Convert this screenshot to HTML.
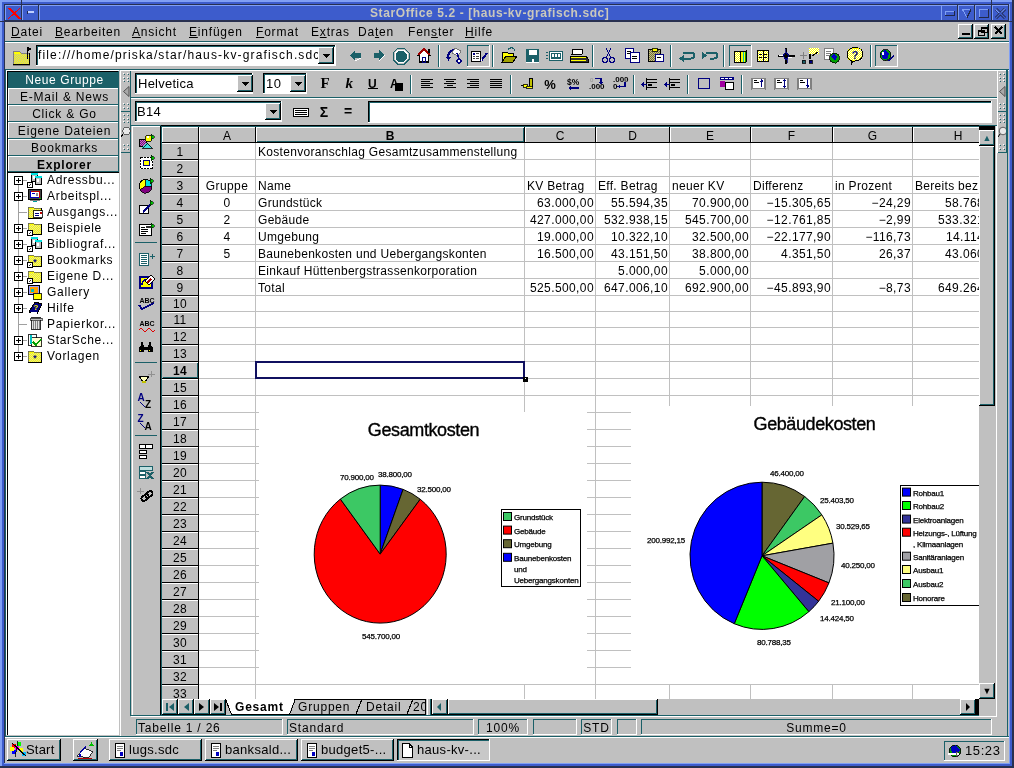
<!DOCTYPE html>
<html><head><meta charset="utf-8"><style>
html,body{margin:0;padding:0;}
body{width:1014px;height:768px;overflow:hidden;position:relative;background:#283050;font-family:"Liberation Sans",sans-serif;}
div{position:absolute;box-sizing:border-box;}
.t{white-space:nowrap;will-change:transform;}
svg{will-change:transform;}
u{text-decoration:underline;text-underline-offset:1px;}
</style></head><body>
<div style="left:0px;top:0px;width:1012px;height:766px;background:#809ff4;"></div>
<div style="left:2px;top:2px;width:1010px;height:764px;background:#3d5ccc;"></div>
<div style="left:4px;top:4px;width:1006px;height:760px;background:#809ff4;"></div>
<div style="left:4px;top:4px;width:1005px;height:759px;background:#283050;"></div>
<div style="left:5px;top:5px;width:1004px;height:758px;background:#c0c0c0;"></div>
<div style="left:5px;top:5px;width:1004px;height:16px;background:#3d5ccc;"></div>
<div style="left:5px;top:5px;width:1004px;height:1px;background:#809ff4;"></div>
<div style="left:5px;top:20px;width:1004px;height:1px;background:#283050;"></div>
<div style="left:5px;top:21px;width:1004px;height:1px;background:#283050;"></div>
<div style="left:5px;top:5px;width:1px;height:15px;background:#809ff4;"></div>
<div style="left:21px;top:5px;width:1px;height:16px;background:#283050;"></div>
<div style="left:22px;top:5px;width:1px;height:15px;background:#809ff4;"></div>
<div style="left:38px;top:5px;width:1px;height:16px;background:#283050;"></div>
<div style="left:21px;top:0px;width:1px;height:21px;background:#283050;"></div>
<div style="left:0px;top:21px;width:5px;height:1px;background:#283050;"></div>
<div style="left:39px;top:5px;width:1px;height:15px;background:#809ff4;"></div>
<div style="left:941px;top:5px;width:1px;height:15px;background:#809ff4;"></div>
<div style="left:957px;top:5px;width:1px;height:16px;background:#283050;"></div>
<div style="left:958px;top:5px;width:1px;height:15px;background:#809ff4;"></div>
<div style="left:974px;top:5px;width:1px;height:16px;background:#283050;"></div>
<div style="left:975px;top:5px;width:1px;height:15px;background:#809ff4;"></div>
<div style="left:991px;top:5px;width:1px;height:16px;background:#283050;"></div>
<div style="left:992px;top:5px;width:1px;height:15px;background:#809ff4;"></div>
<div style="left:1008px;top:5px;width:1px;height:16px;background:#283050;"></div>
<div style="left:991px;top:0px;width:1px;height:5px;background:#283050;"></div>
<div style="left:1009px;top:21px;width:3px;height:1px;background:#283050;"></div>
<div class="t" style="left:370px;top:5px;font-size:12px;letter-spacing:0.6px;color:#cac8bc;text-align:left;line-height:16px;font-weight:bold;">StarOffice 5.2 - [haus-kv-grafisch.sdc]</div>
<div class="t" style="left:11px;top:24px;font-size:12px;letter-spacing:0.8px;color:#000000;text-align:left;line-height:16px;"><u>D</u>atei</div>
<div class="t" style="left:55px;top:24px;font-size:12px;letter-spacing:0.8px;color:#000000;text-align:left;line-height:16px;"><u>B</u>earbeiten</div>
<div class="t" style="left:132px;top:24px;font-size:12px;letter-spacing:0.8px;color:#000000;text-align:left;line-height:16px;"><u>A</u>nsicht</div>
<div class="t" style="left:189px;top:24px;font-size:12px;letter-spacing:0.8px;color:#000000;text-align:left;line-height:16px;"><u>E</u>infügen</div>
<div class="t" style="left:256px;top:24px;font-size:12px;letter-spacing:0.8px;color:#000000;text-align:left;line-height:16px;"><u>F</u>ormat</div>
<div class="t" style="left:311px;top:24px;font-size:12px;letter-spacing:0.8px;color:#000000;text-align:left;line-height:16px;">E<u>x</u>tras</div>
<div class="t" style="left:358px;top:24px;font-size:12px;letter-spacing:0.8px;color:#000000;text-align:left;line-height:16px;">Da<u>t</u>en</div>
<div class="t" style="left:408px;top:24px;font-size:12px;letter-spacing:0.8px;color:#000000;text-align:left;line-height:16px;">Fen<u>s</u>ter</div>
<div class="t" style="left:465px;top:24px;font-size:12px;letter-spacing:0.8px;color:#000000;text-align:left;line-height:16px;"><u>H</u>ilfe</div>
<div style="left:958px;top:24px;width:15px;height:15px;background:#c0c0c0;"></div>
<div style="left:958px;top:24px;width:15px;height:1px;background:#ffffff;"></div>
<div style="left:958px;top:24px;width:1px;height:15px;background:#ffffff;"></div>
<div style="left:958px;top:38px;width:15px;height:1px;background:#1b6068;"></div>
<div style="left:972px;top:24px;width:1px;height:15px;background:#1b6068;"></div>
<div style="left:958px;top:38px;width:15px;height:1px;background:#000000;"></div>
<div style="left:972px;top:24px;width:1px;height:15px;background:#000000;"></div>
<div style="left:959px;top:37px;width:13px;height:1px;background:#1b6068;"></div>
<div style="left:971px;top:25px;width:1px;height:13px;background:#1b6068;"></div>
<div style="left:974px;top:24px;width:15px;height:15px;background:#c0c0c0;"></div>
<div style="left:974px;top:24px;width:15px;height:1px;background:#ffffff;"></div>
<div style="left:974px;top:24px;width:1px;height:15px;background:#ffffff;"></div>
<div style="left:974px;top:38px;width:15px;height:1px;background:#1b6068;"></div>
<div style="left:988px;top:24px;width:1px;height:15px;background:#1b6068;"></div>
<div style="left:974px;top:38px;width:15px;height:1px;background:#000000;"></div>
<div style="left:988px;top:24px;width:1px;height:15px;background:#000000;"></div>
<div style="left:975px;top:37px;width:13px;height:1px;background:#1b6068;"></div>
<div style="left:987px;top:25px;width:1px;height:13px;background:#1b6068;"></div>
<div style="left:991px;top:24px;width:15px;height:15px;background:#c0c0c0;"></div>
<div style="left:991px;top:24px;width:15px;height:1px;background:#ffffff;"></div>
<div style="left:991px;top:24px;width:1px;height:15px;background:#ffffff;"></div>
<div style="left:991px;top:38px;width:15px;height:1px;background:#1b6068;"></div>
<div style="left:1005px;top:24px;width:1px;height:15px;background:#1b6068;"></div>
<div style="left:991px;top:38px;width:15px;height:1px;background:#000000;"></div>
<div style="left:1005px;top:24px;width:1px;height:15px;background:#000000;"></div>
<div style="left:992px;top:37px;width:13px;height:1px;background:#1b6068;"></div>
<div style="left:1004px;top:25px;width:1px;height:13px;background:#1b6068;"></div>
<div style="left:5px;top:41px;width:1004px;height:1px;background:#1b6068;"></div>
<div style="left:5px;top:42px;width:1004px;height:1px;background:#ffffff;"></div>
<div style="left:5px;top:69px;width:1004px;height:1px;background:#1b6068;"></div>
<div style="left:5px;top:70px;width:1004px;height:1px;background:#ffffff;"></div>
<div style="left:36px;top:45px;width:300px;height:21px;background:#ffffff;"></div>
<div style="left:36px;top:45px;width:300px;height:1px;background:#000000;"></div>
<div style="left:36px;top:45px;width:1px;height:21px;background:#000000;"></div>
<div style="left:37px;top:46px;width:298px;height:1px;background:#1b6068;"></div>
<div style="left:37px;top:46px;width:1px;height:19px;background:#1b6068;"></div>
<div style="left:36px;top:65px;width:300px;height:1px;background:#ffffff;"></div>
<div style="left:335px;top:45px;width:1px;height:21px;background:#ffffff;"></div>
<div class="t" style="left:38px;top:47px;width:280px;font-size:12px;letter-spacing:1.15px;color:#000000;text-align:left;line-height:16px;overflow:hidden;white-space:nowrap;">file:///home/priska/star/haus-kv-grafisch.sdc</div>
<div style="left:318px;top:47px;width:16px;height:17px;background:#c0c0c0;"></div>
<div style="left:318px;top:47px;width:16px;height:1px;background:#ffffff;"></div>
<div style="left:318px;top:47px;width:1px;height:17px;background:#ffffff;"></div>
<div style="left:318px;top:63px;width:16px;height:1px;background:#1b6068;"></div>
<div style="left:333px;top:47px;width:1px;height:17px;background:#1b6068;"></div>
<div style="left:318px;top:63px;width:16px;height:1px;background:#000000;"></div>
<div style="left:333px;top:47px;width:1px;height:17px;background:#000000;"></div>
<div style="left:319px;top:62px;width:14px;height:1px;background:#1b6068;"></div>
<div style="left:332px;top:48px;width:1px;height:15px;background:#1b6068;"></div>
<div style="left:131px;top:97px;width:866px;height:1px;background:#1b6068;"></div>
<div style="left:131px;top:98px;width:866px;height:1px;background:#ffffff;"></div>
<div style="left:131px;top:125px;width:866px;height:1px;background:#000000;"></div>
<div style="left:118px;top:70px;width:1px;height:103px;background:#1b6068;"></div>
<div style="left:119px;top:70px;width:1px;height:666px;background:#c0c0c0;"></div>
<div style="left:120px;top:70px;width:1px;height:666px;background:#ffffff;"></div>
<div style="left:130px;top:71px;width:1px;height:645px;background:#1b6068;"></div>
<div style="left:124px;top:74px;width:1px;height:1px;background:#1b6068;"></div>
<div style="left:128px;top:74px;width:1px;height:1px;background:#1b6068;"></div>
<div style="left:123px;top:73px;width:1px;height:1px;background:#ffffff;"></div>
<div style="left:127px;top:73px;width:1px;height:1px;background:#ffffff;"></div>
<div style="left:124px;top:78px;width:1px;height:1px;background:#1b6068;"></div>
<div style="left:128px;top:78px;width:1px;height:1px;background:#1b6068;"></div>
<div style="left:123px;top:77px;width:1px;height:1px;background:#ffffff;"></div>
<div style="left:127px;top:77px;width:1px;height:1px;background:#ffffff;"></div>
<div style="left:124px;top:81px;width:1px;height:1px;background:#1b6068;"></div>
<div style="left:128px;top:81px;width:1px;height:1px;background:#1b6068;"></div>
<div style="left:123px;top:80px;width:1px;height:1px;background:#ffffff;"></div>
<div style="left:127px;top:80px;width:1px;height:1px;background:#ffffff;"></div>
<div style="left:124px;top:104px;width:1px;height:1px;background:#1b6068;"></div>
<div style="left:128px;top:104px;width:1px;height:1px;background:#1b6068;"></div>
<div style="left:123px;top:103px;width:1px;height:1px;background:#ffffff;"></div>
<div style="left:127px;top:103px;width:1px;height:1px;background:#ffffff;"></div>
<div style="left:124px;top:108px;width:1px;height:1px;background:#1b6068;"></div>
<div style="left:128px;top:108px;width:1px;height:1px;background:#1b6068;"></div>
<div style="left:123px;top:107px;width:1px;height:1px;background:#ffffff;"></div>
<div style="left:127px;top:107px;width:1px;height:1px;background:#ffffff;"></div>
<div style="left:124px;top:115px;width:1px;height:1px;background:#1b6068;"></div>
<div style="left:128px;top:115px;width:1px;height:1px;background:#1b6068;"></div>
<div style="left:123px;top:114px;width:1px;height:1px;background:#ffffff;"></div>
<div style="left:127px;top:114px;width:1px;height:1px;background:#ffffff;"></div>
<div style="left:124px;top:119px;width:1px;height:1px;background:#1b6068;"></div>
<div style="left:128px;top:119px;width:1px;height:1px;background:#1b6068;"></div>
<div style="left:123px;top:118px;width:1px;height:1px;background:#ffffff;"></div>
<div style="left:127px;top:118px;width:1px;height:1px;background:#ffffff;"></div>
<div style="left:124px;top:122px;width:1px;height:1px;background:#1b6068;"></div>
<div style="left:128px;top:122px;width:1px;height:1px;background:#1b6068;"></div>
<div style="left:123px;top:121px;width:1px;height:1px;background:#ffffff;"></div>
<div style="left:127px;top:121px;width:1px;height:1px;background:#ffffff;"></div>
<div style="left:124px;top:145px;width:1px;height:1px;background:#1b6068;"></div>
<div style="left:128px;top:145px;width:1px;height:1px;background:#1b6068;"></div>
<div style="left:123px;top:144px;width:1px;height:1px;background:#ffffff;"></div>
<div style="left:127px;top:144px;width:1px;height:1px;background:#ffffff;"></div>
<div style="left:124px;top:149px;width:1px;height:1px;background:#1b6068;"></div>
<div style="left:128px;top:149px;width:1px;height:1px;background:#1b6068;"></div>
<div style="left:123px;top:148px;width:1px;height:1px;background:#ffffff;"></div>
<div style="left:127px;top:148px;width:1px;height:1px;background:#ffffff;"></div>
<div style="left:121px;top:111px;width:9px;height:1px;background:#1b6068;"></div>
<div style="left:121px;top:152px;width:9px;height:1px;background:#1b6068;"></div>
<div style="left:1000px;top:74px;width:1px;height:1px;background:#1b6068;"></div>
<div style="left:1004px;top:74px;width:1px;height:1px;background:#1b6068;"></div>
<div style="left:999px;top:73px;width:1px;height:1px;background:#ffffff;"></div>
<div style="left:1003px;top:73px;width:1px;height:1px;background:#ffffff;"></div>
<div style="left:1000px;top:78px;width:1px;height:1px;background:#1b6068;"></div>
<div style="left:1004px;top:78px;width:1px;height:1px;background:#1b6068;"></div>
<div style="left:999px;top:77px;width:1px;height:1px;background:#ffffff;"></div>
<div style="left:1003px;top:77px;width:1px;height:1px;background:#ffffff;"></div>
<div style="left:1000px;top:81px;width:1px;height:1px;background:#1b6068;"></div>
<div style="left:1004px;top:81px;width:1px;height:1px;background:#1b6068;"></div>
<div style="left:999px;top:80px;width:1px;height:1px;background:#ffffff;"></div>
<div style="left:1003px;top:80px;width:1px;height:1px;background:#ffffff;"></div>
<div style="left:1000px;top:104px;width:1px;height:1px;background:#1b6068;"></div>
<div style="left:1004px;top:104px;width:1px;height:1px;background:#1b6068;"></div>
<div style="left:999px;top:103px;width:1px;height:1px;background:#ffffff;"></div>
<div style="left:1003px;top:103px;width:1px;height:1px;background:#ffffff;"></div>
<div style="left:1000px;top:108px;width:1px;height:1px;background:#1b6068;"></div>
<div style="left:1004px;top:108px;width:1px;height:1px;background:#1b6068;"></div>
<div style="left:999px;top:107px;width:1px;height:1px;background:#ffffff;"></div>
<div style="left:1003px;top:107px;width:1px;height:1px;background:#ffffff;"></div>
<div style="left:1000px;top:115px;width:1px;height:1px;background:#1b6068;"></div>
<div style="left:1004px;top:115px;width:1px;height:1px;background:#1b6068;"></div>
<div style="left:999px;top:114px;width:1px;height:1px;background:#ffffff;"></div>
<div style="left:1003px;top:114px;width:1px;height:1px;background:#ffffff;"></div>
<div style="left:1000px;top:119px;width:1px;height:1px;background:#1b6068;"></div>
<div style="left:1004px;top:119px;width:1px;height:1px;background:#1b6068;"></div>
<div style="left:999px;top:118px;width:1px;height:1px;background:#ffffff;"></div>
<div style="left:1003px;top:118px;width:1px;height:1px;background:#ffffff;"></div>
<div style="left:1000px;top:122px;width:1px;height:1px;background:#1b6068;"></div>
<div style="left:1004px;top:122px;width:1px;height:1px;background:#1b6068;"></div>
<div style="left:999px;top:121px;width:1px;height:1px;background:#ffffff;"></div>
<div style="left:1003px;top:121px;width:1px;height:1px;background:#ffffff;"></div>
<div style="left:1000px;top:145px;width:1px;height:1px;background:#1b6068;"></div>
<div style="left:1004px;top:145px;width:1px;height:1px;background:#1b6068;"></div>
<div style="left:999px;top:144px;width:1px;height:1px;background:#ffffff;"></div>
<div style="left:1003px;top:144px;width:1px;height:1px;background:#ffffff;"></div>
<div style="left:1000px;top:149px;width:1px;height:1px;background:#1b6068;"></div>
<div style="left:1004px;top:149px;width:1px;height:1px;background:#1b6068;"></div>
<div style="left:999px;top:148px;width:1px;height:1px;background:#ffffff;"></div>
<div style="left:1003px;top:148px;width:1px;height:1px;background:#ffffff;"></div>
<div style="left:997px;top:111px;width:9px;height:1px;background:#1b6068;"></div>
<div style="left:997px;top:152px;width:9px;height:1px;background:#1b6068;"></div>
<svg style="position:absolute;left:0;top:0" width="1014" height="160"><polygon points="129,86.5 123.5,91.5 129,96.5" fill="#a8a8a8" stroke="#505050" stroke-width="1"/><polygon points="1005,86.5 999.5,91.5 1005,96.5" fill="#a8a8a8" stroke="#505050" stroke-width="1"/><circle cx="1003" cy="131" r="3.8" fill="#e8e8e8" stroke="#404040" stroke-width="0.8"/><path d="M1000,134 L998,137" stroke="#000" fill="none"/></svg>
<div style="left:997px;top:70px;width:1px;height:83px;background:#ffffff;"></div>
<div style="left:1006px;top:70px;width:1px;height:83px;background:#1b6068;"></div>
<div style="left:1007px;top:70px;width:1px;height:666px;background:#1b6068;"></div>
<div style="left:135px;top:73px;width:118px;height:21px;background:#ffffff;"></div>
<div style="left:135px;top:73px;width:118px;height:1px;background:#000000;"></div>
<div style="left:135px;top:73px;width:1px;height:21px;background:#000000;"></div>
<div style="left:136px;top:74px;width:116px;height:1px;background:#1b6068;"></div>
<div style="left:136px;top:74px;width:1px;height:19px;background:#1b6068;"></div>
<div style="left:135px;top:93px;width:118px;height:1px;background:#ffffff;"></div>
<div style="left:252px;top:73px;width:1px;height:21px;background:#ffffff;"></div>
<div class="t" style="left:138px;top:75px;font-size:13px;letter-spacing:0.25px;color:#000000;text-align:left;line-height:17px;">Helvetica</div>
<div style="left:237px;top:75px;width:16px;height:17px;background:#c0c0c0;"></div>
<div style="left:237px;top:75px;width:16px;height:1px;background:#ffffff;"></div>
<div style="left:237px;top:75px;width:1px;height:17px;background:#ffffff;"></div>
<div style="left:237px;top:91px;width:16px;height:1px;background:#1b6068;"></div>
<div style="left:252px;top:75px;width:1px;height:17px;background:#1b6068;"></div>
<div style="left:237px;top:91px;width:16px;height:1px;background:#000000;"></div>
<div style="left:252px;top:75px;width:1px;height:17px;background:#000000;"></div>
<div style="left:238px;top:90px;width:14px;height:1px;background:#1b6068;"></div>
<div style="left:251px;top:76px;width:1px;height:15px;background:#1b6068;"></div>
<div style="left:263px;top:73px;width:44px;height:21px;background:#ffffff;"></div>
<div style="left:263px;top:73px;width:44px;height:1px;background:#000000;"></div>
<div style="left:263px;top:73px;width:1px;height:21px;background:#000000;"></div>
<div style="left:264px;top:74px;width:42px;height:1px;background:#1b6068;"></div>
<div style="left:264px;top:74px;width:1px;height:19px;background:#1b6068;"></div>
<div style="left:263px;top:93px;width:44px;height:1px;background:#ffffff;"></div>
<div style="left:306px;top:73px;width:1px;height:21px;background:#ffffff;"></div>
<div class="t" style="left:266px;top:75px;font-size:13px;letter-spacing:0.4px;color:#000000;text-align:left;line-height:17px;">10</div>
<div style="left:290px;top:75px;width:16px;height:17px;background:#c0c0c0;"></div>
<div style="left:290px;top:75px;width:16px;height:1px;background:#ffffff;"></div>
<div style="left:290px;top:75px;width:1px;height:17px;background:#ffffff;"></div>
<div style="left:290px;top:91px;width:16px;height:1px;background:#1b6068;"></div>
<div style="left:305px;top:75px;width:1px;height:17px;background:#1b6068;"></div>
<div style="left:290px;top:91px;width:16px;height:1px;background:#000000;"></div>
<div style="left:305px;top:75px;width:1px;height:17px;background:#000000;"></div>
<div style="left:291px;top:90px;width:14px;height:1px;background:#1b6068;"></div>
<div style="left:304px;top:76px;width:1px;height:15px;background:#1b6068;"></div>
<div style="left:135px;top:101px;width:147px;height:21px;background:#ffffff;"></div>
<div style="left:135px;top:101px;width:147px;height:1px;background:#000000;"></div>
<div style="left:135px;top:101px;width:1px;height:21px;background:#000000;"></div>
<div style="left:136px;top:102px;width:145px;height:1px;background:#1b6068;"></div>
<div style="left:136px;top:102px;width:1px;height:19px;background:#1b6068;"></div>
<div style="left:135px;top:121px;width:147px;height:1px;background:#ffffff;"></div>
<div style="left:281px;top:101px;width:1px;height:21px;background:#ffffff;"></div>
<div class="t" style="left:137px;top:103px;font-size:13px;letter-spacing:0.3px;color:#000000;text-align:left;line-height:17px;">B14</div>
<div style="left:265px;top:103px;width:16px;height:17px;background:#c0c0c0;"></div>
<div style="left:265px;top:103px;width:16px;height:1px;background:#ffffff;"></div>
<div style="left:265px;top:103px;width:1px;height:17px;background:#ffffff;"></div>
<div style="left:265px;top:119px;width:16px;height:1px;background:#1b6068;"></div>
<div style="left:280px;top:103px;width:1px;height:17px;background:#1b6068;"></div>
<div style="left:265px;top:119px;width:16px;height:1px;background:#000000;"></div>
<div style="left:280px;top:103px;width:1px;height:17px;background:#000000;"></div>
<div style="left:266px;top:118px;width:14px;height:1px;background:#1b6068;"></div>
<div style="left:279px;top:104px;width:1px;height:15px;background:#1b6068;"></div>
<div style="left:368px;top:101px;width:624px;height:22px;background:#ffffff;"></div>
<div style="left:368px;top:101px;width:624px;height:1px;background:#000000;"></div>
<div style="left:368px;top:101px;width:1px;height:22px;background:#000000;"></div>
<div style="left:369px;top:102px;width:622px;height:1px;background:#1b6068;"></div>
<div style="left:369px;top:102px;width:1px;height:20px;background:#1b6068;"></div>
<div style="left:368px;top:122px;width:624px;height:1px;background:#ffffff;"></div>
<div style="left:991px;top:101px;width:1px;height:22px;background:#ffffff;"></div>
<div style="left:5px;top:70px;width:113px;height:666px;background:#c0c0c0;"></div>
<div style="left:5px;top:69px;width:114px;height:1px;background:#1b6068;"></div>
<div style="left:5px;top:70px;width:1px;height:666px;background:#1b6068;"></div>
<div style="left:6px;top:70px;width:113px;height:1px;background:#ffffff;"></div>
<div style="left:6px;top:70px;width:1px;height:665px;background:#ffffff;"></div>
<div style="left:7px;top:71px;width:111px;height:1px;background:#000000;"></div>
<div style="left:7px;top:71px;width:1px;height:664px;background:#000000;"></div>
<div style="left:8px;top:72px;width:111px;height:16px;background:#1b6068;"></div>
<div class="t" style="left:9px;top:72px;width:111px;font-size:12px;letter-spacing:0.6px;color:#ffffff;text-align:center;line-height:17px;">Neue Gruppe</div>
<div style="left:8px;top:88px;width:111px;height:17px;background:#c0c0c0;"></div>
<div style="left:8px;top:88px;width:111px;height:1px;background:#ffffff;"></div>
<div style="left:8px;top:88px;width:1px;height:17px;background:#ffffff;"></div>
<div style="left:8px;top:104px;width:111px;height:1px;background:#1b6068;"></div>
<div style="left:118px;top:88px;width:1px;height:17px;background:#1b6068;"></div>
<div class="t" style="left:9px;top:89px;width:111px;font-size:12px;letter-spacing:0.8px;color:#000000;text-align:center;line-height:17px;">E-Mail &amp; News</div>
<div style="left:8px;top:105px;width:111px;height:17px;background:#c0c0c0;"></div>
<div style="left:8px;top:105px;width:111px;height:1px;background:#ffffff;"></div>
<div style="left:8px;top:105px;width:1px;height:17px;background:#ffffff;"></div>
<div style="left:8px;top:121px;width:111px;height:1px;background:#1b6068;"></div>
<div style="left:118px;top:105px;width:1px;height:17px;background:#1b6068;"></div>
<div class="t" style="left:9px;top:106px;width:111px;font-size:12px;letter-spacing:0.8px;color:#000000;text-align:center;line-height:17px;">Click &amp; Go</div>
<div style="left:8px;top:122px;width:111px;height:17px;background:#c0c0c0;"></div>
<div style="left:8px;top:122px;width:111px;height:1px;background:#ffffff;"></div>
<div style="left:8px;top:122px;width:1px;height:17px;background:#ffffff;"></div>
<div style="left:8px;top:138px;width:111px;height:1px;background:#1b6068;"></div>
<div style="left:118px;top:122px;width:1px;height:17px;background:#1b6068;"></div>
<div class="t" style="left:9px;top:123px;width:111px;font-size:12px;letter-spacing:0.8px;color:#000000;text-align:center;line-height:17px;">Eigene Dateien</div>
<div style="left:8px;top:139px;width:111px;height:17px;background:#c0c0c0;"></div>
<div style="left:8px;top:139px;width:111px;height:1px;background:#ffffff;"></div>
<div style="left:8px;top:139px;width:1px;height:17px;background:#ffffff;"></div>
<div style="left:8px;top:155px;width:111px;height:1px;background:#1b6068;"></div>
<div style="left:118px;top:139px;width:1px;height:17px;background:#1b6068;"></div>
<div class="t" style="left:9px;top:140px;width:111px;font-size:12px;letter-spacing:0.8px;color:#000000;text-align:center;line-height:17px;">Bookmarks</div>
<div style="left:8px;top:156px;width:111px;height:16px;background:#c0c0c0;"></div>
<div style="left:8px;top:156px;width:111px;height:1px;background:#ffffff;"></div>
<div style="left:8px;top:156px;width:1px;height:16px;background:#ffffff;"></div>
<div style="left:8px;top:171px;width:111px;height:1px;background:#1b6068;"></div>
<div style="left:118px;top:156px;width:1px;height:16px;background:#1b6068;"></div>
<div class="t" style="left:9px;top:157px;width:111px;font-size:12px;letter-spacing:0.8px;color:#000000;text-align:center;line-height:16px;font-weight:bold;">Explorer</div>
<div style="left:8px;top:171px;width:111px;height:1px;background:#1b6068;"></div>
<div style="left:8px;top:172px;width:111px;height:1px;background:#000000;"></div>
<div style="left:8px;top:173px;width:111px;height:562px;background:#ffffff;"></div>
<div style="left:18px;top:185px;width:1px;height:168px;background:#a0a0a0;"></div>
<div class="t" style="left:47px;top:172px;font-size:12px;letter-spacing:0.7px;color:#000000;text-align:left;line-height:16px;">Adressbu...</div>
<div style="left:23px;top:180px;width:4px;height:1px;background:#a0a0a0;"></div>
<div style="left:14px;top:176px;width:9px;height:9px;background:#000000;"></div>
<div style="left:15px;top:177px;width:7px;height:7px;background:#ffffff;"></div>
<div style="left:16px;top:180px;width:5px;height:1px;background:#000000;"></div>
<div style="left:18px;top:178px;width:1px;height:5px;background:#000000;"></div>
<div class="t" style="left:47px;top:188px;font-size:12px;letter-spacing:0.7px;color:#000000;text-align:left;line-height:16px;">Arbeitspl...</div>
<div style="left:23px;top:196px;width:4px;height:1px;background:#a0a0a0;"></div>
<div style="left:14px;top:192px;width:9px;height:9px;background:#000000;"></div>
<div style="left:15px;top:193px;width:7px;height:7px;background:#ffffff;"></div>
<div style="left:16px;top:196px;width:5px;height:1px;background:#000000;"></div>
<div style="left:18px;top:194px;width:1px;height:5px;background:#000000;"></div>
<div class="t" style="left:47px;top:204px;font-size:12px;letter-spacing:0.7px;color:#000000;text-align:left;line-height:16px;">Ausgangs...</div>
<div style="left:23px;top:212px;width:4px;height:1px;background:#a0a0a0;"></div>
<div style="left:18px;top:212px;width:9px;height:1px;background:#a0a0a0;"></div>
<div class="t" style="left:47px;top:220px;font-size:12px;letter-spacing:0.7px;color:#000000;text-align:left;line-height:16px;">Beispiele</div>
<div style="left:23px;top:228px;width:4px;height:1px;background:#a0a0a0;"></div>
<div style="left:14px;top:224px;width:9px;height:9px;background:#000000;"></div>
<div style="left:15px;top:225px;width:7px;height:7px;background:#ffffff;"></div>
<div style="left:16px;top:228px;width:5px;height:1px;background:#000000;"></div>
<div style="left:18px;top:226px;width:1px;height:5px;background:#000000;"></div>
<div class="t" style="left:47px;top:236px;font-size:12px;letter-spacing:0.7px;color:#000000;text-align:left;line-height:16px;">Bibliograf...</div>
<div style="left:23px;top:244px;width:4px;height:1px;background:#a0a0a0;"></div>
<div style="left:14px;top:240px;width:9px;height:9px;background:#000000;"></div>
<div style="left:15px;top:241px;width:7px;height:7px;background:#ffffff;"></div>
<div style="left:16px;top:244px;width:5px;height:1px;background:#000000;"></div>
<div style="left:18px;top:242px;width:1px;height:5px;background:#000000;"></div>
<div class="t" style="left:47px;top:252px;font-size:12px;letter-spacing:0.7px;color:#000000;text-align:left;line-height:16px;">Bookmarks</div>
<div style="left:23px;top:260px;width:4px;height:1px;background:#a0a0a0;"></div>
<div style="left:14px;top:256px;width:9px;height:9px;background:#000000;"></div>
<div style="left:15px;top:257px;width:7px;height:7px;background:#ffffff;"></div>
<div style="left:16px;top:260px;width:5px;height:1px;background:#000000;"></div>
<div style="left:18px;top:258px;width:1px;height:5px;background:#000000;"></div>
<div class="t" style="left:47px;top:268px;font-size:12px;letter-spacing:0.7px;color:#000000;text-align:left;line-height:16px;">Eigene D...</div>
<div style="left:23px;top:276px;width:4px;height:1px;background:#a0a0a0;"></div>
<div style="left:14px;top:272px;width:9px;height:9px;background:#000000;"></div>
<div style="left:15px;top:273px;width:7px;height:7px;background:#ffffff;"></div>
<div style="left:16px;top:276px;width:5px;height:1px;background:#000000;"></div>
<div style="left:18px;top:274px;width:1px;height:5px;background:#000000;"></div>
<div class="t" style="left:47px;top:284px;font-size:12px;letter-spacing:0.7px;color:#000000;text-align:left;line-height:16px;">Gallery</div>
<div style="left:23px;top:292px;width:4px;height:1px;background:#a0a0a0;"></div>
<div style="left:14px;top:288px;width:9px;height:9px;background:#000000;"></div>
<div style="left:15px;top:289px;width:7px;height:7px;background:#ffffff;"></div>
<div style="left:16px;top:292px;width:5px;height:1px;background:#000000;"></div>
<div style="left:18px;top:290px;width:1px;height:5px;background:#000000;"></div>
<div class="t" style="left:47px;top:300px;font-size:12px;letter-spacing:0.7px;color:#000000;text-align:left;line-height:16px;">Hilfe</div>
<div style="left:23px;top:308px;width:4px;height:1px;background:#a0a0a0;"></div>
<div style="left:14px;top:304px;width:9px;height:9px;background:#000000;"></div>
<div style="left:15px;top:305px;width:7px;height:7px;background:#ffffff;"></div>
<div style="left:16px;top:308px;width:5px;height:1px;background:#000000;"></div>
<div style="left:18px;top:306px;width:1px;height:5px;background:#000000;"></div>
<div class="t" style="left:47px;top:316px;font-size:12px;letter-spacing:0.7px;color:#000000;text-align:left;line-height:16px;">Papierkor...</div>
<div style="left:23px;top:324px;width:4px;height:1px;background:#a0a0a0;"></div>
<div style="left:18px;top:324px;width:9px;height:1px;background:#a0a0a0;"></div>
<div class="t" style="left:47px;top:332px;font-size:12px;letter-spacing:0.7px;color:#000000;text-align:left;line-height:16px;">StarSche...</div>
<div style="left:23px;top:340px;width:4px;height:1px;background:#a0a0a0;"></div>
<div style="left:14px;top:336px;width:9px;height:9px;background:#000000;"></div>
<div style="left:15px;top:337px;width:7px;height:7px;background:#ffffff;"></div>
<div style="left:16px;top:340px;width:5px;height:1px;background:#000000;"></div>
<div style="left:18px;top:338px;width:1px;height:5px;background:#000000;"></div>
<div class="t" style="left:47px;top:348px;font-size:12px;letter-spacing:0.7px;color:#000000;text-align:left;line-height:16px;">Vorlagen</div>
<div style="left:23px;top:356px;width:4px;height:1px;background:#a0a0a0;"></div>
<div style="left:14px;top:352px;width:9px;height:9px;background:#000000;"></div>
<div style="left:15px;top:353px;width:7px;height:7px;background:#ffffff;"></div>
<div style="left:16px;top:356px;width:5px;height:1px;background:#000000;"></div>
<div style="left:18px;top:354px;width:1px;height:5px;background:#000000;"></div>
<div style="left:131px;top:126px;width:866px;height:590px;background:#c0c0c0;"></div>
<div style="left:130px;top:125px;width:867px;height:1px;background:#1b6068;"></div>
<div style="left:132px;top:126px;width:1px;height:590px;background:#ffffff;"></div>
<div style="left:132px;top:126px;width:29px;height:1px;background:#ffffff;"></div>
<div style="left:996px;top:126px;width:1px;height:590px;background:#ffffff;"></div>
<div style="left:199px;top:143px;width:780px;height:556px;background:#ffffff;"></div>
<div style="left:160px;top:126px;width:1px;height:590px;background:#000000;"></div>
<div style="left:161px;top:126px;width:1px;height:590px;background:#1b6068;"></div>
<div style="left:161px;top:125px;width:818px;height:1px;background:#000000;"></div>
<div style="left:162px;top:126px;width:817px;height:1px;background:#1b6068;"></div>
<div style="left:162px;top:127px;width:817px;height:15px;background:#c0c0c0;"></div>
<div style="left:162px;top:142px;width:817px;height:1px;background:#000000;"></div>
<div style="left:199px;top:127px;width:56px;height:1px;background:#ffffff;"></div>
<div style="left:199px;top:127px;width:1px;height:15px;background:#ffffff;"></div>
<div style="left:255px;top:127px;width:1px;height:15px;background:#000000;"></div>
<div class="t" style="left:199px;top:128px;width:56px;font-size:12px;letter-spacing:0px;color:#000000;text-align:center;line-height:16px;overflow:hidden;">A</div>
<div style="left:256px;top:127px;width:268px;height:1px;background:#ffffff;"></div>
<div style="left:256px;top:127px;width:1px;height:15px;background:#ffffff;"></div>
<div style="left:524px;top:127px;width:1px;height:15px;background:#000000;"></div>
<div style="left:257px;top:141px;width:267px;height:1px;background:#1b6068;"></div>
<div style="left:523px;top:128px;width:1px;height:14px;background:#1b6068;"></div>
<div class="t" style="left:256px;top:128px;width:268px;font-size:12px;letter-spacing:0px;color:#000000;text-align:center;line-height:16px;font-weight:bold;overflow:hidden;">B</div>
<div style="left:525px;top:127px;width:70px;height:1px;background:#ffffff;"></div>
<div style="left:525px;top:127px;width:1px;height:15px;background:#ffffff;"></div>
<div style="left:595px;top:127px;width:1px;height:15px;background:#000000;"></div>
<div class="t" style="left:525px;top:128px;width:70px;font-size:12px;letter-spacing:0px;color:#000000;text-align:center;line-height:16px;overflow:hidden;">C</div>
<div style="left:596px;top:127px;width:73px;height:1px;background:#ffffff;"></div>
<div style="left:596px;top:127px;width:1px;height:15px;background:#ffffff;"></div>
<div style="left:669px;top:127px;width:1px;height:15px;background:#000000;"></div>
<div class="t" style="left:596px;top:128px;width:73px;font-size:12px;letter-spacing:0px;color:#000000;text-align:center;line-height:16px;overflow:hidden;">D</div>
<div style="left:670px;top:127px;width:80px;height:1px;background:#ffffff;"></div>
<div style="left:670px;top:127px;width:1px;height:15px;background:#ffffff;"></div>
<div style="left:750px;top:127px;width:1px;height:15px;background:#000000;"></div>
<div class="t" style="left:670px;top:128px;width:80px;font-size:12px;letter-spacing:0px;color:#000000;text-align:center;line-height:16px;overflow:hidden;">E</div>
<div style="left:751px;top:127px;width:81px;height:1px;background:#ffffff;"></div>
<div style="left:751px;top:127px;width:1px;height:15px;background:#ffffff;"></div>
<div style="left:832px;top:127px;width:1px;height:15px;background:#000000;"></div>
<div class="t" style="left:751px;top:128px;width:81px;font-size:12px;letter-spacing:0px;color:#000000;text-align:center;line-height:16px;overflow:hidden;">F</div>
<div style="left:833px;top:127px;width:79px;height:1px;background:#ffffff;"></div>
<div style="left:833px;top:127px;width:1px;height:15px;background:#ffffff;"></div>
<div style="left:912px;top:127px;width:1px;height:15px;background:#000000;"></div>
<div class="t" style="left:833px;top:128px;width:79px;font-size:12px;letter-spacing:0px;color:#000000;text-align:center;line-height:16px;overflow:hidden;">G</div>
<div style="left:913px;top:127px;width:66px;height:1px;background:#ffffff;"></div>
<div style="left:913px;top:127px;width:1px;height:15px;background:#ffffff;"></div>
<div class="t" style="left:913px;top:128px;width:90px;font-size:12px;letter-spacing:0px;color:#000000;text-align:center;line-height:16px;overflow:hidden;">H</div>
<div style="left:162px;top:127px;width:36px;height:1px;background:#ffffff;"></div>
<div style="left:162px;top:127px;width:1px;height:15px;background:#ffffff;"></div>
<div style="left:198px;top:127px;width:1px;height:15px;background:#000000;"></div>
<div style="left:162px;top:143px;width:36px;height:16px;background:#c0c0c0;"></div>
<div style="left:162px;top:143px;width:36px;height:1px;background:#ffffff;"></div>
<div style="left:162px;top:159px;width:37px;height:1px;background:#000000;"></div>
<div style="left:199px;top:159px;width:780px;height:1px;background:#c0c0c0;"></div>
<div class="t" style="left:162px;top:144px;width:36px;font-size:12px;letter-spacing:0.3px;color:#000000;text-align:center;line-height:16px;">1</div>
<div style="left:162px;top:160px;width:36px;height:16px;background:#c0c0c0;"></div>
<div style="left:162px;top:160px;width:36px;height:1px;background:#ffffff;"></div>
<div style="left:162px;top:176px;width:37px;height:1px;background:#000000;"></div>
<div style="left:199px;top:176px;width:780px;height:1px;background:#c0c0c0;"></div>
<div class="t" style="left:162px;top:161px;width:36px;font-size:12px;letter-spacing:0.3px;color:#000000;text-align:center;line-height:16px;">2</div>
<div style="left:162px;top:177px;width:36px;height:16px;background:#c0c0c0;"></div>
<div style="left:162px;top:177px;width:36px;height:1px;background:#ffffff;"></div>
<div style="left:162px;top:193px;width:37px;height:1px;background:#000000;"></div>
<div style="left:199px;top:193px;width:780px;height:1px;background:#c0c0c0;"></div>
<div class="t" style="left:162px;top:178px;width:36px;font-size:12px;letter-spacing:0.3px;color:#000000;text-align:center;line-height:16px;">3</div>
<div style="left:162px;top:194px;width:36px;height:16px;background:#c0c0c0;"></div>
<div style="left:162px;top:194px;width:36px;height:1px;background:#ffffff;"></div>
<div style="left:162px;top:210px;width:37px;height:1px;background:#000000;"></div>
<div style="left:199px;top:210px;width:780px;height:1px;background:#c0c0c0;"></div>
<div class="t" style="left:162px;top:195px;width:36px;font-size:12px;letter-spacing:0.3px;color:#000000;text-align:center;line-height:16px;">4</div>
<div style="left:162px;top:211px;width:36px;height:16px;background:#c0c0c0;"></div>
<div style="left:162px;top:211px;width:36px;height:1px;background:#ffffff;"></div>
<div style="left:162px;top:227px;width:37px;height:1px;background:#000000;"></div>
<div style="left:199px;top:227px;width:780px;height:1px;background:#c0c0c0;"></div>
<div class="t" style="left:162px;top:212px;width:36px;font-size:12px;letter-spacing:0.3px;color:#000000;text-align:center;line-height:16px;">5</div>
<div style="left:162px;top:228px;width:36px;height:16px;background:#c0c0c0;"></div>
<div style="left:162px;top:228px;width:36px;height:1px;background:#ffffff;"></div>
<div style="left:162px;top:244px;width:37px;height:1px;background:#000000;"></div>
<div style="left:199px;top:244px;width:780px;height:1px;background:#c0c0c0;"></div>
<div class="t" style="left:162px;top:229px;width:36px;font-size:12px;letter-spacing:0.3px;color:#000000;text-align:center;line-height:16px;">6</div>
<div style="left:162px;top:245px;width:36px;height:16px;background:#c0c0c0;"></div>
<div style="left:162px;top:245px;width:36px;height:1px;background:#ffffff;"></div>
<div style="left:162px;top:261px;width:37px;height:1px;background:#000000;"></div>
<div style="left:199px;top:261px;width:780px;height:1px;background:#c0c0c0;"></div>
<div class="t" style="left:162px;top:246px;width:36px;font-size:12px;letter-spacing:0.3px;color:#000000;text-align:center;line-height:16px;">7</div>
<div style="left:162px;top:262px;width:36px;height:16px;background:#c0c0c0;"></div>
<div style="left:162px;top:262px;width:36px;height:1px;background:#ffffff;"></div>
<div style="left:162px;top:278px;width:37px;height:1px;background:#000000;"></div>
<div style="left:199px;top:278px;width:780px;height:1px;background:#c0c0c0;"></div>
<div class="t" style="left:162px;top:263px;width:36px;font-size:12px;letter-spacing:0.3px;color:#000000;text-align:center;line-height:16px;">8</div>
<div style="left:162px;top:279px;width:36px;height:16px;background:#c0c0c0;"></div>
<div style="left:162px;top:279px;width:36px;height:1px;background:#ffffff;"></div>
<div style="left:162px;top:295px;width:37px;height:1px;background:#000000;"></div>
<div style="left:199px;top:295px;width:780px;height:1px;background:#c0c0c0;"></div>
<div class="t" style="left:162px;top:280px;width:36px;font-size:12px;letter-spacing:0.3px;color:#000000;text-align:center;line-height:16px;">9</div>
<div style="left:162px;top:296px;width:36px;height:15px;background:#c0c0c0;"></div>
<div style="left:162px;top:296px;width:36px;height:1px;background:#ffffff;"></div>
<div style="left:162px;top:311px;width:37px;height:1px;background:#000000;"></div>
<div style="left:199px;top:311px;width:780px;height:1px;background:#c0c0c0;"></div>
<div class="t" style="left:162px;top:297px;width:36px;font-size:12px;letter-spacing:0.3px;color:#000000;text-align:center;line-height:15px;">10</div>
<div style="left:162px;top:312px;width:36px;height:15px;background:#c0c0c0;"></div>
<div style="left:162px;top:312px;width:36px;height:1px;background:#ffffff;"></div>
<div style="left:162px;top:327px;width:37px;height:1px;background:#000000;"></div>
<div style="left:199px;top:327px;width:780px;height:1px;background:#c0c0c0;"></div>
<div class="t" style="left:162px;top:313px;width:36px;font-size:12px;letter-spacing:0.3px;color:#000000;text-align:center;line-height:15px;">11</div>
<div style="left:162px;top:328px;width:36px;height:16px;background:#c0c0c0;"></div>
<div style="left:162px;top:328px;width:36px;height:1px;background:#ffffff;"></div>
<div style="left:162px;top:344px;width:37px;height:1px;background:#000000;"></div>
<div style="left:199px;top:344px;width:780px;height:1px;background:#c0c0c0;"></div>
<div class="t" style="left:162px;top:329px;width:36px;font-size:12px;letter-spacing:0.3px;color:#000000;text-align:center;line-height:16px;">12</div>
<div style="left:162px;top:345px;width:36px;height:16px;background:#c0c0c0;"></div>
<div style="left:162px;top:345px;width:36px;height:1px;background:#ffffff;"></div>
<div style="left:162px;top:361px;width:37px;height:1px;background:#000000;"></div>
<div style="left:199px;top:361px;width:780px;height:1px;background:#c0c0c0;"></div>
<div class="t" style="left:162px;top:346px;width:36px;font-size:12px;letter-spacing:0.3px;color:#000000;text-align:center;line-height:16px;">13</div>
<div style="left:162px;top:362px;width:36px;height:16px;background:#c0c0c0;"></div>
<div style="left:162px;top:362px;width:36px;height:1px;background:#ffffff;"></div>
<div style="left:162px;top:378px;width:37px;height:1px;background:#000000;"></div>
<div style="left:199px;top:378px;width:780px;height:1px;background:#c0c0c0;"></div>
<div style="left:197px;top:363px;width:1px;height:15px;background:#1b6068;"></div>
<div style="left:163px;top:377px;width:35px;height:1px;background:#1b6068;"></div>
<div class="t" style="left:162px;top:363px;width:36px;font-size:12px;letter-spacing:0.3px;color:#000000;text-align:center;line-height:16px;font-weight:bold;">14</div>
<div style="left:162px;top:379px;width:36px;height:16px;background:#c0c0c0;"></div>
<div style="left:162px;top:379px;width:36px;height:1px;background:#ffffff;"></div>
<div style="left:162px;top:395px;width:37px;height:1px;background:#000000;"></div>
<div style="left:199px;top:395px;width:780px;height:1px;background:#c0c0c0;"></div>
<div class="t" style="left:162px;top:380px;width:36px;font-size:12px;letter-spacing:0.3px;color:#000000;text-align:center;line-height:16px;">15</div>
<div style="left:162px;top:396px;width:36px;height:16px;background:#c0c0c0;"></div>
<div style="left:162px;top:396px;width:36px;height:1px;background:#ffffff;"></div>
<div style="left:162px;top:412px;width:37px;height:1px;background:#000000;"></div>
<div style="left:199px;top:412px;width:780px;height:1px;background:#c0c0c0;"></div>
<div class="t" style="left:162px;top:397px;width:36px;font-size:12px;letter-spacing:0.3px;color:#000000;text-align:center;line-height:16px;">16</div>
<div style="left:162px;top:413px;width:36px;height:16px;background:#c0c0c0;"></div>
<div style="left:162px;top:413px;width:36px;height:1px;background:#ffffff;"></div>
<div style="left:162px;top:429px;width:37px;height:1px;background:#000000;"></div>
<div style="left:199px;top:429px;width:780px;height:1px;background:#c0c0c0;"></div>
<div class="t" style="left:162px;top:414px;width:36px;font-size:12px;letter-spacing:0.3px;color:#000000;text-align:center;line-height:16px;">17</div>
<div style="left:162px;top:430px;width:36px;height:16px;background:#c0c0c0;"></div>
<div style="left:162px;top:430px;width:36px;height:1px;background:#ffffff;"></div>
<div style="left:162px;top:446px;width:37px;height:1px;background:#000000;"></div>
<div style="left:199px;top:446px;width:780px;height:1px;background:#c0c0c0;"></div>
<div class="t" style="left:162px;top:431px;width:36px;font-size:12px;letter-spacing:0.3px;color:#000000;text-align:center;line-height:16px;">18</div>
<div style="left:162px;top:447px;width:36px;height:16px;background:#c0c0c0;"></div>
<div style="left:162px;top:447px;width:36px;height:1px;background:#ffffff;"></div>
<div style="left:162px;top:463px;width:37px;height:1px;background:#000000;"></div>
<div style="left:199px;top:463px;width:780px;height:1px;background:#c0c0c0;"></div>
<div class="t" style="left:162px;top:448px;width:36px;font-size:12px;letter-spacing:0.3px;color:#000000;text-align:center;line-height:16px;">19</div>
<div style="left:162px;top:464px;width:36px;height:16px;background:#c0c0c0;"></div>
<div style="left:162px;top:464px;width:36px;height:1px;background:#ffffff;"></div>
<div style="left:162px;top:480px;width:37px;height:1px;background:#000000;"></div>
<div style="left:199px;top:480px;width:780px;height:1px;background:#c0c0c0;"></div>
<div class="t" style="left:162px;top:465px;width:36px;font-size:12px;letter-spacing:0.3px;color:#000000;text-align:center;line-height:16px;">20</div>
<div style="left:162px;top:481px;width:36px;height:16px;background:#c0c0c0;"></div>
<div style="left:162px;top:481px;width:36px;height:1px;background:#ffffff;"></div>
<div style="left:162px;top:497px;width:37px;height:1px;background:#000000;"></div>
<div style="left:199px;top:497px;width:780px;height:1px;background:#c0c0c0;"></div>
<div class="t" style="left:162px;top:482px;width:36px;font-size:12px;letter-spacing:0.3px;color:#000000;text-align:center;line-height:16px;">21</div>
<div style="left:162px;top:498px;width:36px;height:16px;background:#c0c0c0;"></div>
<div style="left:162px;top:498px;width:36px;height:1px;background:#ffffff;"></div>
<div style="left:162px;top:514px;width:37px;height:1px;background:#000000;"></div>
<div style="left:199px;top:514px;width:780px;height:1px;background:#c0c0c0;"></div>
<div class="t" style="left:162px;top:499px;width:36px;font-size:12px;letter-spacing:0.3px;color:#000000;text-align:center;line-height:16px;">22</div>
<div style="left:162px;top:515px;width:36px;height:16px;background:#c0c0c0;"></div>
<div style="left:162px;top:515px;width:36px;height:1px;background:#ffffff;"></div>
<div style="left:162px;top:531px;width:37px;height:1px;background:#000000;"></div>
<div style="left:199px;top:531px;width:780px;height:1px;background:#c0c0c0;"></div>
<div class="t" style="left:162px;top:516px;width:36px;font-size:12px;letter-spacing:0.3px;color:#000000;text-align:center;line-height:16px;">23</div>
<div style="left:162px;top:532px;width:36px;height:16px;background:#c0c0c0;"></div>
<div style="left:162px;top:532px;width:36px;height:1px;background:#ffffff;"></div>
<div style="left:162px;top:548px;width:37px;height:1px;background:#000000;"></div>
<div style="left:199px;top:548px;width:780px;height:1px;background:#c0c0c0;"></div>
<div class="t" style="left:162px;top:533px;width:36px;font-size:12px;letter-spacing:0.3px;color:#000000;text-align:center;line-height:16px;">24</div>
<div style="left:162px;top:549px;width:36px;height:16px;background:#c0c0c0;"></div>
<div style="left:162px;top:549px;width:36px;height:1px;background:#ffffff;"></div>
<div style="left:162px;top:565px;width:37px;height:1px;background:#000000;"></div>
<div style="left:199px;top:565px;width:780px;height:1px;background:#c0c0c0;"></div>
<div class="t" style="left:162px;top:550px;width:36px;font-size:12px;letter-spacing:0.3px;color:#000000;text-align:center;line-height:16px;">25</div>
<div style="left:162px;top:566px;width:36px;height:16px;background:#c0c0c0;"></div>
<div style="left:162px;top:566px;width:36px;height:1px;background:#ffffff;"></div>
<div style="left:162px;top:582px;width:37px;height:1px;background:#000000;"></div>
<div style="left:199px;top:582px;width:780px;height:1px;background:#c0c0c0;"></div>
<div class="t" style="left:162px;top:567px;width:36px;font-size:12px;letter-spacing:0.3px;color:#000000;text-align:center;line-height:16px;">26</div>
<div style="left:162px;top:583px;width:36px;height:16px;background:#c0c0c0;"></div>
<div style="left:162px;top:583px;width:36px;height:1px;background:#ffffff;"></div>
<div style="left:162px;top:599px;width:37px;height:1px;background:#000000;"></div>
<div style="left:199px;top:599px;width:780px;height:1px;background:#c0c0c0;"></div>
<div class="t" style="left:162px;top:584px;width:36px;font-size:12px;letter-spacing:0.3px;color:#000000;text-align:center;line-height:16px;">27</div>
<div style="left:162px;top:600px;width:36px;height:16px;background:#c0c0c0;"></div>
<div style="left:162px;top:600px;width:36px;height:1px;background:#ffffff;"></div>
<div style="left:162px;top:616px;width:37px;height:1px;background:#000000;"></div>
<div style="left:199px;top:616px;width:780px;height:1px;background:#c0c0c0;"></div>
<div class="t" style="left:162px;top:601px;width:36px;font-size:12px;letter-spacing:0.3px;color:#000000;text-align:center;line-height:16px;">28</div>
<div style="left:162px;top:617px;width:36px;height:16px;background:#c0c0c0;"></div>
<div style="left:162px;top:617px;width:36px;height:1px;background:#ffffff;"></div>
<div style="left:162px;top:633px;width:37px;height:1px;background:#000000;"></div>
<div style="left:199px;top:633px;width:780px;height:1px;background:#c0c0c0;"></div>
<div class="t" style="left:162px;top:618px;width:36px;font-size:12px;letter-spacing:0.3px;color:#000000;text-align:center;line-height:16px;">29</div>
<div style="left:162px;top:634px;width:36px;height:16px;background:#c0c0c0;"></div>
<div style="left:162px;top:634px;width:36px;height:1px;background:#ffffff;"></div>
<div style="left:162px;top:650px;width:37px;height:1px;background:#000000;"></div>
<div style="left:199px;top:650px;width:780px;height:1px;background:#c0c0c0;"></div>
<div class="t" style="left:162px;top:635px;width:36px;font-size:12px;letter-spacing:0.3px;color:#000000;text-align:center;line-height:16px;">30</div>
<div style="left:162px;top:651px;width:36px;height:16px;background:#c0c0c0;"></div>
<div style="left:162px;top:651px;width:36px;height:1px;background:#ffffff;"></div>
<div style="left:162px;top:667px;width:37px;height:1px;background:#000000;"></div>
<div style="left:199px;top:667px;width:780px;height:1px;background:#c0c0c0;"></div>
<div class="t" style="left:162px;top:652px;width:36px;font-size:12px;letter-spacing:0.3px;color:#000000;text-align:center;line-height:16px;">31</div>
<div style="left:162px;top:668px;width:36px;height:16px;background:#c0c0c0;"></div>
<div style="left:162px;top:668px;width:36px;height:1px;background:#ffffff;"></div>
<div style="left:162px;top:684px;width:37px;height:1px;background:#000000;"></div>
<div style="left:199px;top:684px;width:780px;height:1px;background:#c0c0c0;"></div>
<div class="t" style="left:162px;top:669px;width:36px;font-size:12px;letter-spacing:0.3px;color:#000000;text-align:center;line-height:16px;">32</div>
<div style="left:162px;top:685px;width:36px;height:14px;background:#c0c0c0;"></div>
<div style="left:162px;top:685px;width:36px;height:1px;background:#ffffff;"></div>
<div class="t" style="left:162px;top:686px;width:36px;font-size:12px;letter-spacing:0.3px;color:#000000;text-align:center;line-height:16px;">33</div>
<div style="left:198px;top:143px;width:1px;height:556px;background:#000000;"></div>
<div style="left:255px;top:143px;width:1px;height:556px;background:#c0c0c0;"></div>
<div style="left:524px;top:143px;width:1px;height:556px;background:#c0c0c0;"></div>
<div style="left:595px;top:143px;width:1px;height:556px;background:#c0c0c0;"></div>
<div style="left:669px;top:143px;width:1px;height:556px;background:#c0c0c0;"></div>
<div style="left:750px;top:143px;width:1px;height:556px;background:#c0c0c0;"></div>
<div style="left:832px;top:143px;width:1px;height:556px;background:#c0c0c0;"></div>
<div style="left:912px;top:143px;width:1px;height:556px;background:#c0c0c0;"></div>
<div class="t" style="left:258px;top:144px;font-size:12px;letter-spacing:0.3px;color:#000000;text-align:left;line-height:16px;white-space:nowrap;">Kostenvoranschlag Gesamtzusammenstellung</div>
<div class="t" style="left:199px;top:178px;width:56px;font-size:12px;letter-spacing:0.4px;color:#000000;text-align:center;line-height:16px;white-space:nowrap;">Gruppe</div>
<div class="t" style="left:258px;top:178px;font-size:12px;letter-spacing:0.3px;color:#000000;text-align:left;line-height:16px;white-space:nowrap;">Name</div>
<div class="t" style="left:527px;top:178px;font-size:12px;letter-spacing:0.3px;color:#000000;text-align:left;line-height:16px;white-space:nowrap;">KV Betrag</div>
<div class="t" style="left:598px;top:178px;font-size:12px;letter-spacing:0.3px;color:#000000;text-align:left;line-height:16px;white-space:nowrap;">Eff. Betrag</div>
<div class="t" style="left:672px;top:178px;font-size:12px;letter-spacing:0.3px;color:#000000;text-align:left;line-height:16px;white-space:nowrap;">neuer KV</div>
<div class="t" style="left:753px;top:178px;font-size:12px;letter-spacing:0.3px;color:#000000;text-align:left;line-height:16px;white-space:nowrap;">Differenz</div>
<div class="t" style="left:835px;top:178px;font-size:12px;letter-spacing:0.3px;color:#000000;text-align:left;line-height:16px;white-space:nowrap;">in Prozent</div>
<div class="t" style="left:915px;top:178px;font-size:12px;letter-spacing:0.3px;color:#000000;text-align:left;line-height:16px;white-space:nowrap;">Bereits bez</div>
<div style="left:0;top:0;width:979px;height:699px;overflow:hidden">
<div class="t" style="left:199px;top:195px;width:56px;font-size:12px;letter-spacing:0.4px;color:#000000;text-align:center;line-height:16px;white-space:nowrap;">0</div>
<div class="t" style="left:258px;top:195px;font-size:12px;letter-spacing:0.3px;color:#000000;text-align:left;line-height:16px;white-space:nowrap;">Grundstück</div>
<div class="t" style="left:525px;top:195px;width:69px;font-size:12px;letter-spacing:0.4px;color:#000000;text-align:right;line-height:16px;white-space:nowrap;">63.000,00</div>
<div class="t" style="left:596px;top:195px;width:72px;font-size:12px;letter-spacing:0.4px;color:#000000;text-align:right;line-height:16px;white-space:nowrap;">55.594,35</div>
<div class="t" style="left:670px;top:195px;width:79px;font-size:12px;letter-spacing:0.4px;color:#000000;text-align:right;line-height:16px;white-space:nowrap;">70.900,00</div>
<div class="t" style="left:751px;top:195px;width:80px;font-size:12px;letter-spacing:0.4px;color:#000000;text-align:right;line-height:16px;white-space:nowrap;">&minus;15.305,65</div>
<div class="t" style="left:833px;top:195px;width:78px;font-size:12px;letter-spacing:0.4px;color:#000000;text-align:right;line-height:16px;white-space:nowrap;">&minus;24,29</div>
<div class="t" style="left:913px;top:195px;width:89px;font-size:12px;letter-spacing:0.4px;color:#000000;text-align:right;line-height:16px;white-space:nowrap;">58.768,00</div>
<div class="t" style="left:199px;top:212px;width:56px;font-size:12px;letter-spacing:0.4px;color:#000000;text-align:center;line-height:16px;white-space:nowrap;">2</div>
<div class="t" style="left:258px;top:212px;font-size:12px;letter-spacing:0.3px;color:#000000;text-align:left;line-height:16px;white-space:nowrap;">Gebäude</div>
<div class="t" style="left:525px;top:212px;width:69px;font-size:12px;letter-spacing:0.4px;color:#000000;text-align:right;line-height:16px;white-space:nowrap;">427.000,00</div>
<div class="t" style="left:596px;top:212px;width:72px;font-size:12px;letter-spacing:0.4px;color:#000000;text-align:right;line-height:16px;white-space:nowrap;">532.938,15</div>
<div class="t" style="left:670px;top:212px;width:79px;font-size:12px;letter-spacing:0.4px;color:#000000;text-align:right;line-height:16px;white-space:nowrap;">545.700,00</div>
<div class="t" style="left:751px;top:212px;width:80px;font-size:12px;letter-spacing:0.4px;color:#000000;text-align:right;line-height:16px;white-space:nowrap;">&minus;12.761,85</div>
<div class="t" style="left:833px;top:212px;width:78px;font-size:12px;letter-spacing:0.4px;color:#000000;text-align:right;line-height:16px;white-space:nowrap;">&minus;2,99</div>
<div class="t" style="left:913px;top:212px;width:89px;font-size:12px;letter-spacing:0.4px;color:#000000;text-align:right;line-height:16px;white-space:nowrap;">533.321,00</div>
<div class="t" style="left:199px;top:229px;width:56px;font-size:12px;letter-spacing:0.4px;color:#000000;text-align:center;line-height:16px;white-space:nowrap;">4</div>
<div class="t" style="left:258px;top:229px;font-size:12px;letter-spacing:0.3px;color:#000000;text-align:left;line-height:16px;white-space:nowrap;">Umgebung</div>
<div class="t" style="left:525px;top:229px;width:69px;font-size:12px;letter-spacing:0.4px;color:#000000;text-align:right;line-height:16px;white-space:nowrap;">19.000,00</div>
<div class="t" style="left:596px;top:229px;width:72px;font-size:12px;letter-spacing:0.4px;color:#000000;text-align:right;line-height:16px;white-space:nowrap;">10.322,10</div>
<div class="t" style="left:670px;top:229px;width:79px;font-size:12px;letter-spacing:0.4px;color:#000000;text-align:right;line-height:16px;white-space:nowrap;">32.500,00</div>
<div class="t" style="left:751px;top:229px;width:80px;font-size:12px;letter-spacing:0.4px;color:#000000;text-align:right;line-height:16px;white-space:nowrap;">&minus;22.177,90</div>
<div class="t" style="left:833px;top:229px;width:78px;font-size:12px;letter-spacing:0.4px;color:#000000;text-align:right;line-height:16px;white-space:nowrap;">&minus;116,73</div>
<div class="t" style="left:913px;top:229px;width:89px;font-size:12px;letter-spacing:0.4px;color:#000000;text-align:right;line-height:16px;white-space:nowrap;">14.114,00</div>
<div class="t" style="left:199px;top:246px;width:56px;font-size:12px;letter-spacing:0.4px;color:#000000;text-align:center;line-height:16px;white-space:nowrap;">5</div>
<div class="t" style="left:258px;top:246px;font-size:12px;letter-spacing:0.3px;color:#000000;text-align:left;line-height:16px;white-space:nowrap;">Baunebenkosten und Uebergangskonten</div>
<div class="t" style="left:525px;top:246px;width:69px;font-size:12px;letter-spacing:0.4px;color:#000000;text-align:right;line-height:16px;white-space:nowrap;">16.500,00</div>
<div class="t" style="left:596px;top:246px;width:72px;font-size:12px;letter-spacing:0.4px;color:#000000;text-align:right;line-height:16px;white-space:nowrap;">43.151,50</div>
<div class="t" style="left:670px;top:246px;width:79px;font-size:12px;letter-spacing:0.4px;color:#000000;text-align:right;line-height:16px;white-space:nowrap;">38.800,00</div>
<div class="t" style="left:751px;top:246px;width:80px;font-size:12px;letter-spacing:0.4px;color:#000000;text-align:right;line-height:16px;white-space:nowrap;">4.351,50</div>
<div class="t" style="left:833px;top:246px;width:78px;font-size:12px;letter-spacing:0.4px;color:#000000;text-align:right;line-height:16px;white-space:nowrap;">26,37</div>
<div class="t" style="left:913px;top:246px;width:89px;font-size:12px;letter-spacing:0.4px;color:#000000;text-align:right;line-height:16px;white-space:nowrap;">43.060,00</div>
<div class="t" style="left:258px;top:263px;font-size:12px;letter-spacing:0.3px;color:#000000;text-align:left;line-height:16px;white-space:nowrap;">Einkauf Hüttenbergstrassenkorporation</div>
<div class="t" style="left:596px;top:263px;width:72px;font-size:12px;letter-spacing:0.4px;color:#000000;text-align:right;line-height:16px;white-space:nowrap;">5.000,00</div>
<div class="t" style="left:670px;top:263px;width:79px;font-size:12px;letter-spacing:0.4px;color:#000000;text-align:right;line-height:16px;white-space:nowrap;">5.000,00</div>
<div class="t" style="left:258px;top:280px;font-size:12px;letter-spacing:0.3px;color:#000000;text-align:left;line-height:16px;white-space:nowrap;">Total</div>
<div class="t" style="left:525px;top:280px;width:69px;font-size:12px;letter-spacing:0.4px;color:#000000;text-align:right;line-height:16px;white-space:nowrap;">525.500,00</div>
<div class="t" style="left:596px;top:280px;width:72px;font-size:12px;letter-spacing:0.4px;color:#000000;text-align:right;line-height:16px;white-space:nowrap;">647.006,10</div>
<div class="t" style="left:670px;top:280px;width:79px;font-size:12px;letter-spacing:0.4px;color:#000000;text-align:right;line-height:16px;white-space:nowrap;">692.900,00</div>
<div class="t" style="left:751px;top:280px;width:80px;font-size:12px;letter-spacing:0.4px;color:#000000;text-align:right;line-height:16px;white-space:nowrap;">&minus;45.893,90</div>
<div class="t" style="left:833px;top:280px;width:78px;font-size:12px;letter-spacing:0.4px;color:#000000;text-align:right;line-height:16px;white-space:nowrap;">&minus;8,73</div>
<div class="t" style="left:913px;top:280px;width:89px;font-size:12px;letter-spacing:0.4px;color:#000000;text-align:right;line-height:16px;white-space:nowrap;">649.264,00</div>
</div>
<div style="left:255px;top:361px;width:270px;height:2px;background:#101060;"></div>
<div style="left:255px;top:377px;width:270px;height:2px;background:#101060;"></div>
<div style="left:255px;top:361px;width:2px;height:18px;background:#101060;"></div>
<div style="left:523px;top:361px;width:2px;height:18px;background:#101060;"></div>
<div style="left:523px;top:377px;width:5px;height:5px;background:#000000;"></div>
<div style="left:525px;top:378px;width:1px;height:1px;background:#ffffff;"></div>
<div style="left:979px;top:126px;width:16px;height:573px;background:#c0c0c0;"></div>
<div style="left:979px;top:126px;width:16px;height:4px;background:#000000;"></div>
<div style="left:979px;top:130px;width:16px;height:16px;background:#c0c0c0;"></div>
<div style="left:979px;top:130px;width:16px;height:1px;background:#ffffff;"></div>
<div style="left:979px;top:130px;width:1px;height:16px;background:#ffffff;"></div>
<div style="left:979px;top:145px;width:16px;height:1px;background:#1b6068;"></div>
<div style="left:994px;top:130px;width:1px;height:16px;background:#1b6068;"></div>
<div style="left:979px;top:145px;width:16px;height:1px;background:#000000;"></div>
<div style="left:994px;top:130px;width:1px;height:16px;background:#000000;"></div>
<div style="left:980px;top:144px;width:14px;height:1px;background:#1b6068;"></div>
<div style="left:993px;top:131px;width:1px;height:14px;background:#1b6068;"></div>
<div class="t" style="left:979px;top:130px;width:16px;font-size:9px;line-height:16px;text-align:center;color:#1b6068">&#9650;</div>
<div style="left:979px;top:146px;width:16px;height:260px;background:#c0c0c0;"></div>
<div style="left:979px;top:146px;width:16px;height:1px;background:#ffffff;"></div>
<div style="left:979px;top:146px;width:1px;height:260px;background:#ffffff;"></div>
<div style="left:979px;top:405px;width:16px;height:1px;background:#1b6068;"></div>
<div style="left:994px;top:146px;width:1px;height:260px;background:#1b6068;"></div>
<div style="left:979px;top:405px;width:16px;height:1px;background:#000000;"></div>
<div style="left:994px;top:146px;width:1px;height:260px;background:#000000;"></div>
<div style="left:980px;top:404px;width:14px;height:1px;background:#1b6068;"></div>
<div style="left:993px;top:147px;width:1px;height:258px;background:#1b6068;"></div>
<div style="left:979px;top:683px;width:16px;height:16px;background:#c0c0c0;"></div>
<div style="left:979px;top:683px;width:16px;height:1px;background:#ffffff;"></div>
<div style="left:979px;top:683px;width:1px;height:16px;background:#ffffff;"></div>
<div style="left:979px;top:698px;width:16px;height:1px;background:#1b6068;"></div>
<div style="left:994px;top:683px;width:1px;height:16px;background:#1b6068;"></div>
<div style="left:979px;top:698px;width:16px;height:1px;background:#000000;"></div>
<div style="left:994px;top:683px;width:1px;height:16px;background:#000000;"></div>
<div style="left:980px;top:697px;width:14px;height:1px;background:#1b6068;"></div>
<div style="left:993px;top:684px;width:1px;height:14px;background:#1b6068;"></div>
<div class="t" style="left:979px;top:683px;width:16px;font-size:9px;line-height:16px;text-align:center;color:#000">&#9660;</div>
<div style="left:162px;top:699px;width:817px;height:17px;background:#c0c0c0;"></div>
<div style="left:162px;top:699px;width:16px;height:16px;background:#c0c0c0;"></div>
<div style="left:162px;top:699px;width:16px;height:1px;background:#ffffff;"></div>
<div style="left:162px;top:699px;width:1px;height:16px;background:#ffffff;"></div>
<div style="left:162px;top:714px;width:16px;height:1px;background:#1b6068;"></div>
<div style="left:177px;top:699px;width:1px;height:16px;background:#1b6068;"></div>
<div style="left:162px;top:714px;width:16px;height:1px;background:#000000;"></div>
<div style="left:177px;top:699px;width:1px;height:16px;background:#000000;"></div>
<div style="left:163px;top:713px;width:14px;height:1px;background:#1b6068;"></div>
<div style="left:176px;top:700px;width:1px;height:14px;background:#1b6068;"></div>
<div style="left:178px;top:699px;width:16px;height:16px;background:#c0c0c0;"></div>
<div style="left:178px;top:699px;width:16px;height:1px;background:#ffffff;"></div>
<div style="left:178px;top:699px;width:1px;height:16px;background:#ffffff;"></div>
<div style="left:178px;top:714px;width:16px;height:1px;background:#1b6068;"></div>
<div style="left:193px;top:699px;width:1px;height:16px;background:#1b6068;"></div>
<div style="left:178px;top:714px;width:16px;height:1px;background:#000000;"></div>
<div style="left:193px;top:699px;width:1px;height:16px;background:#000000;"></div>
<div style="left:179px;top:713px;width:14px;height:1px;background:#1b6068;"></div>
<div style="left:192px;top:700px;width:1px;height:14px;background:#1b6068;"></div>
<div style="left:194px;top:699px;width:16px;height:16px;background:#c0c0c0;"></div>
<div style="left:194px;top:699px;width:16px;height:1px;background:#ffffff;"></div>
<div style="left:194px;top:699px;width:1px;height:16px;background:#ffffff;"></div>
<div style="left:194px;top:714px;width:16px;height:1px;background:#1b6068;"></div>
<div style="left:209px;top:699px;width:1px;height:16px;background:#1b6068;"></div>
<div style="left:194px;top:714px;width:16px;height:1px;background:#000000;"></div>
<div style="left:209px;top:699px;width:1px;height:16px;background:#000000;"></div>
<div style="left:195px;top:713px;width:14px;height:1px;background:#1b6068;"></div>
<div style="left:208px;top:700px;width:1px;height:14px;background:#1b6068;"></div>
<div style="left:210px;top:699px;width:16px;height:16px;background:#c0c0c0;"></div>
<div style="left:210px;top:699px;width:16px;height:1px;background:#ffffff;"></div>
<div style="left:210px;top:699px;width:1px;height:16px;background:#ffffff;"></div>
<div style="left:210px;top:714px;width:16px;height:1px;background:#1b6068;"></div>
<div style="left:225px;top:699px;width:1px;height:16px;background:#1b6068;"></div>
<div style="left:210px;top:714px;width:16px;height:1px;background:#000000;"></div>
<div style="left:225px;top:699px;width:1px;height:16px;background:#000000;"></div>
<div style="left:211px;top:713px;width:14px;height:1px;background:#1b6068;"></div>
<div style="left:224px;top:700px;width:1px;height:14px;background:#1b6068;"></div>
<svg style="position:absolute;left:162px;top:699px" width="64" height="16"><rect x="4" y="4" width="2" height="8" fill="#1b6068"/><polygon points="12,4 12,12 7,8" fill="#1b6068"/><polygon points="27,4 27,12 22,8" fill="#1b6068"/><polygon points="37,4 37,12 42,8" fill="#000"/><polygon points="52,4 52,12 57,8" fill="#000"/><rect x="58" y="4" width="2" height="8" fill="#000"/></svg>
<svg style="position:absolute;left:225px;top:699px" width="204" height="17" shape-rendering="crispEdges"><polygon points="66,0 60,15 131,15 137,0" fill="#c0c0c0" stroke="#000" stroke-width="1"/><polygon points="137,0 131,15 182,15 188,0" fill="#c0c0c0" stroke="#000" stroke-width="1"/><polygon points="188,0 182,15 200.5,15 200.5,0" fill="#c0c0c0" stroke="#000" stroke-width="1"/><polygon points="0,-1 6,15 64,15 70,-1" fill="#fff"/><polyline points="0.5,0 6.5,15.5 64.5,15.5 70.5,0" fill="none" stroke="#000" stroke-width="1"/></svg>
<div class="t" style="left:235px;top:699px;font-size:12px;letter-spacing:0.8px;color:#000000;text-align:left;line-height:16px;font-weight:bold;">Gesamt</div>
<div class="t" style="left:298px;top:699px;font-size:12px;letter-spacing:0.8px;color:#000000;text-align:left;line-height:16px;">Gruppen</div>
<div class="t" style="left:366px;top:699px;font-size:12px;letter-spacing:0.8px;color:#000000;text-align:left;line-height:16px;">Detail</div>
<div style="left:413px;top:699px;width:13px;height:16px;overflow:hidden"><div class="t" style="left:0;top:0;font-size:12px;letter-spacing:0.8px;line-height:16px">20</div></div>
<div style="left:427px;top:699px;width:1px;height:16px;background:#ffffff;"></div>
<div style="left:430px;top:699px;width:1px;height:16px;background:#1b6068;"></div>
<div style="left:431px;top:699px;width:1px;height:16px;background:#000000;"></div>
<div style="left:432px;top:699px;width:16px;height:16px;background:#c0c0c0;"></div>
<div style="left:432px;top:699px;width:16px;height:1px;background:#ffffff;"></div>
<div style="left:432px;top:699px;width:1px;height:16px;background:#ffffff;"></div>
<div style="left:432px;top:714px;width:16px;height:1px;background:#1b6068;"></div>
<div style="left:447px;top:699px;width:1px;height:16px;background:#1b6068;"></div>
<div style="left:432px;top:714px;width:16px;height:1px;background:#000000;"></div>
<div style="left:447px;top:699px;width:1px;height:16px;background:#000000;"></div>
<div style="left:433px;top:713px;width:14px;height:1px;background:#1b6068;"></div>
<div style="left:446px;top:700px;width:1px;height:14px;background:#1b6068;"></div>
<svg style="position:absolute;left:432px;top:699px" width="16" height="16"><polygon points="9,4 9,12 5,8" fill="#1b6068"/></svg>
<div style="left:448px;top:699px;width:210px;height:16px;background:#c0c0c0;"></div>
<div style="left:448px;top:699px;width:210px;height:1px;background:#ffffff;"></div>
<div style="left:448px;top:699px;width:1px;height:16px;background:#ffffff;"></div>
<div style="left:448px;top:714px;width:210px;height:1px;background:#1b6068;"></div>
<div style="left:657px;top:699px;width:1px;height:16px;background:#1b6068;"></div>
<div style="left:448px;top:714px;width:210px;height:1px;background:#000000;"></div>
<div style="left:657px;top:699px;width:1px;height:16px;background:#000000;"></div>
<div style="left:449px;top:713px;width:208px;height:1px;background:#1b6068;"></div>
<div style="left:656px;top:700px;width:1px;height:14px;background:#1b6068;"></div>
<div style="left:960px;top:699px;width:16px;height:16px;background:#c0c0c0;"></div>
<div style="left:960px;top:699px;width:16px;height:1px;background:#ffffff;"></div>
<div style="left:960px;top:699px;width:1px;height:16px;background:#ffffff;"></div>
<div style="left:960px;top:714px;width:16px;height:1px;background:#1b6068;"></div>
<div style="left:975px;top:699px;width:1px;height:16px;background:#1b6068;"></div>
<div style="left:960px;top:714px;width:16px;height:1px;background:#000000;"></div>
<div style="left:975px;top:699px;width:1px;height:16px;background:#000000;"></div>
<div style="left:961px;top:713px;width:14px;height:1px;background:#1b6068;"></div>
<div style="left:974px;top:700px;width:1px;height:14px;background:#1b6068;"></div>
<svg style="position:absolute;left:960px;top:699px" width="16" height="16"><polygon points="6,4 6,12 10,8" fill="#000"/></svg>
<div style="left:976px;top:699px;width:3px;height:17px;background:#000000;"></div>
<div style="left:131px;top:715px;width:848px;height:1px;background:#1b6068;"></div>
<div style="left:131px;top:716px;width:866px;height:1px;background:#ffffff;"></div>
<div style="left:136px;top:719px;width:147px;height:16px;background:#c0c0c0;"></div>
<div style="left:136px;top:719px;width:147px;height:1px;background:#1b6068;"></div>
<div style="left:136px;top:719px;width:1px;height:16px;background:#1b6068;"></div>
<div style="left:136px;top:734px;width:147px;height:1px;background:#ffffff;"></div>
<div style="left:282px;top:719px;width:1px;height:16px;background:#ffffff;"></div>
<div class="t" style="left:138px;top:720px;font-size:12px;letter-spacing:0.8px;color:#000000;text-align:left;line-height:16px;">Tabelle 1 / 26</div>
<div style="left:287px;top:719px;width:187px;height:16px;background:#c0c0c0;"></div>
<div style="left:287px;top:719px;width:187px;height:1px;background:#1b6068;"></div>
<div style="left:287px;top:719px;width:1px;height:16px;background:#1b6068;"></div>
<div style="left:287px;top:734px;width:187px;height:1px;background:#ffffff;"></div>
<div style="left:473px;top:719px;width:1px;height:16px;background:#ffffff;"></div>
<div class="t" style="left:289px;top:720px;font-size:12px;letter-spacing:0.8px;color:#000000;text-align:left;line-height:16px;">Standard</div>
<div style="left:478px;top:719px;width:50px;height:16px;background:#c0c0c0;"></div>
<div style="left:478px;top:719px;width:50px;height:1px;background:#1b6068;"></div>
<div style="left:478px;top:719px;width:1px;height:16px;background:#1b6068;"></div>
<div style="left:478px;top:734px;width:50px;height:1px;background:#ffffff;"></div>
<div style="left:527px;top:719px;width:1px;height:16px;background:#ffffff;"></div>
<div class="t" style="left:478px;top:720px;width:50px;font-size:12px;letter-spacing:0.8px;color:#000000;text-align:center;line-height:16px;">100%</div>
<div style="left:533px;top:719px;width:44px;height:16px;background:#c0c0c0;"></div>
<div style="left:533px;top:719px;width:44px;height:1px;background:#1b6068;"></div>
<div style="left:533px;top:719px;width:1px;height:16px;background:#1b6068;"></div>
<div style="left:533px;top:734px;width:44px;height:1px;background:#ffffff;"></div>
<div style="left:576px;top:719px;width:1px;height:16px;background:#ffffff;"></div>
<div style="left:581px;top:719px;width:31px;height:16px;background:#c0c0c0;"></div>
<div style="left:581px;top:719px;width:31px;height:1px;background:#1b6068;"></div>
<div style="left:581px;top:719px;width:1px;height:16px;background:#1b6068;"></div>
<div style="left:581px;top:734px;width:31px;height:1px;background:#ffffff;"></div>
<div style="left:611px;top:719px;width:1px;height:16px;background:#ffffff;"></div>
<div class="t" style="left:581px;top:720px;width:31px;font-size:12px;letter-spacing:0.8px;color:#000000;text-align:center;line-height:16px;">STD</div>
<div style="left:617px;top:719px;width:20px;height:16px;background:#c0c0c0;"></div>
<div style="left:617px;top:719px;width:20px;height:1px;background:#1b6068;"></div>
<div style="left:617px;top:719px;width:1px;height:16px;background:#1b6068;"></div>
<div style="left:617px;top:734px;width:20px;height:1px;background:#ffffff;"></div>
<div style="left:636px;top:719px;width:1px;height:16px;background:#ffffff;"></div>
<div style="left:641px;top:719px;width:351px;height:16px;background:#c0c0c0;"></div>
<div style="left:641px;top:719px;width:351px;height:1px;background:#1b6068;"></div>
<div style="left:641px;top:719px;width:1px;height:16px;background:#1b6068;"></div>
<div style="left:641px;top:734px;width:351px;height:1px;background:#ffffff;"></div>
<div style="left:991px;top:719px;width:1px;height:16px;background:#ffffff;"></div>
<div class="t" style="left:641px;top:720px;width:351px;font-size:12px;letter-spacing:0.8px;color:#000000;text-align:center;line-height:16px;">Summe=0</div>
<div style="left:5px;top:736px;width:1004px;height:1px;background:#1b6068;"></div>
<div style="left:5px;top:737px;width:1004px;height:1px;background:#ffffff;"></div>
<div style="left:1007px;top:70px;width:1px;height:667px;background:#1b6068;"></div>
<div style="left:7px;top:739px;width:54px;height:22px;background:#c0c0c0;"></div>
<div style="left:7px;top:739px;width:54px;height:1px;background:#ffffff;"></div>
<div style="left:7px;top:739px;width:1px;height:22px;background:#ffffff;"></div>
<div style="left:7px;top:760px;width:54px;height:1px;background:#1b6068;"></div>
<div style="left:60px;top:739px;width:1px;height:22px;background:#1b6068;"></div>
<div style="left:7px;top:760px;width:54px;height:1px;background:#000000;"></div>
<div style="left:60px;top:739px;width:1px;height:22px;background:#000000;"></div>
<div style="left:8px;top:759px;width:52px;height:1px;background:#1b6068;"></div>
<div style="left:59px;top:740px;width:1px;height:20px;background:#1b6068;"></div>
<div class="t" style="left:26px;top:741px;font-size:13px;letter-spacing:0.2px;color:#000000;text-align:left;line-height:18px;">Start</div>
<div style="left:73px;top:739px;width:25px;height:22px;background:#c0c0c0;"></div>
<div style="left:73px;top:739px;width:25px;height:1px;background:#ffffff;"></div>
<div style="left:73px;top:739px;width:1px;height:22px;background:#ffffff;"></div>
<div style="left:73px;top:760px;width:25px;height:1px;background:#1b6068;"></div>
<div style="left:97px;top:739px;width:1px;height:22px;background:#1b6068;"></div>
<div style="left:73px;top:760px;width:25px;height:1px;background:#000000;"></div>
<div style="left:97px;top:739px;width:1px;height:22px;background:#000000;"></div>
<div style="left:74px;top:759px;width:23px;height:1px;background:#1b6068;"></div>
<div style="left:96px;top:740px;width:1px;height:20px;background:#1b6068;"></div>
<div style="left:109px;top:739px;width:93px;height:22px;background:#c0c0c0;"></div>
<div style="left:109px;top:739px;width:93px;height:1px;background:#ffffff;"></div>
<div style="left:109px;top:739px;width:1px;height:22px;background:#ffffff;"></div>
<div style="left:109px;top:760px;width:93px;height:1px;background:#1b6068;"></div>
<div style="left:201px;top:739px;width:1px;height:22px;background:#1b6068;"></div>
<div style="left:109px;top:760px;width:93px;height:1px;background:#000000;"></div>
<div style="left:201px;top:739px;width:1px;height:22px;background:#000000;"></div>
<div style="left:110px;top:759px;width:91px;height:1px;background:#1b6068;"></div>
<div style="left:200px;top:740px;width:1px;height:20px;background:#1b6068;"></div>
<div class="t" style="left:129px;top:741px;font-size:13px;letter-spacing:0.3px;color:#000000;text-align:left;line-height:18px;">lugs.sdc</div>
<div style="left:205px;top:739px;width:93px;height:22px;background:#c0c0c0;"></div>
<div style="left:205px;top:739px;width:93px;height:1px;background:#ffffff;"></div>
<div style="left:205px;top:739px;width:1px;height:22px;background:#ffffff;"></div>
<div style="left:205px;top:760px;width:93px;height:1px;background:#1b6068;"></div>
<div style="left:297px;top:739px;width:1px;height:22px;background:#1b6068;"></div>
<div style="left:205px;top:760px;width:93px;height:1px;background:#000000;"></div>
<div style="left:297px;top:739px;width:1px;height:22px;background:#000000;"></div>
<div style="left:206px;top:759px;width:91px;height:1px;background:#1b6068;"></div>
<div style="left:296px;top:740px;width:1px;height:20px;background:#1b6068;"></div>
<div class="t" style="left:225px;top:741px;font-size:13px;letter-spacing:0.3px;color:#000000;text-align:left;line-height:18px;">banksald...</div>
<div style="left:301px;top:739px;width:93px;height:22px;background:#c0c0c0;"></div>
<div style="left:301px;top:739px;width:93px;height:1px;background:#ffffff;"></div>
<div style="left:301px;top:739px;width:1px;height:22px;background:#ffffff;"></div>
<div style="left:301px;top:760px;width:93px;height:1px;background:#1b6068;"></div>
<div style="left:393px;top:739px;width:1px;height:22px;background:#1b6068;"></div>
<div style="left:301px;top:760px;width:93px;height:1px;background:#000000;"></div>
<div style="left:393px;top:739px;width:1px;height:22px;background:#000000;"></div>
<div style="left:302px;top:759px;width:91px;height:1px;background:#1b6068;"></div>
<div style="left:392px;top:740px;width:1px;height:20px;background:#1b6068;"></div>
<div class="t" style="left:321px;top:741px;font-size:13px;letter-spacing:0.3px;color:#000000;text-align:left;line-height:18px;">budget5-...</div>
<div style="left:397px;top:739px;width:93px;height:22px;background:#c8c8c8;"></div>
<div style="left:397px;top:739px;width:93px;height:1px;background:#000000;"></div>
<div style="left:397px;top:739px;width:1px;height:22px;background:#000000;"></div>
<div style="left:398px;top:740px;width:91px;height:1px;background:#1b6068;"></div>
<div style="left:398px;top:740px;width:1px;height:20px;background:#1b6068;"></div>
<div style="left:397px;top:760px;width:93px;height:1px;background:#ffffff;"></div>
<div style="left:489px;top:739px;width:1px;height:22px;background:#ffffff;"></div>
<div class="t" style="left:417px;top:741px;font-size:13px;letter-spacing:0.3px;color:#000000;text-align:left;line-height:18px;">haus-kv-...</div>
<div style="left:944px;top:741px;width:61px;height:20px;background:#c0c0c0;"></div>
<div style="left:944px;top:741px;width:61px;height:1px;background:#1b6068;"></div>
<div style="left:944px;top:741px;width:1px;height:20px;background:#1b6068;"></div>
<div style="left:944px;top:760px;width:61px;height:1px;background:#ffffff;"></div>
<div style="left:1004px;top:741px;width:1px;height:20px;background:#ffffff;"></div>
<div class="t" style="left:965px;top:742px;font-size:13px;letter-spacing:0.6px;color:#000000;text-align:left;line-height:18px;">15:23</div>
<svg style="position:absolute;left:259px;top:412px" width="328" height="272"><rect x="0" y="0" width="328" height="272" fill="#fff"/><path d="M121.19999999999999,142.10000000000002 L121.20,73.10 A66,69 0 0 1 144.10,77.39 Z" fill="#0000ff" stroke="#000" stroke-width="1"/><path d="M121.19999999999999,142.10000000000002 L144.10,77.39 A66,69 0 0 1 161.21,87.22 Z" fill="#666633" stroke="#000" stroke-width="1"/><path d="M121.19999999999999,142.10000000000002 L161.21,87.22 A66,69 0 1 1 81.38,87.07 Z" fill="#ff0000" stroke="#000" stroke-width="1"/><path d="M121.19999999999999,142.10000000000002 L81.38,87.07 A66,69 0 0 1 121.20,73.10 Z" fill="#3cc864" stroke="#000" stroke-width="1"/><text x="164.5" y="24" font-size="18" text-anchor="middle" letter-spacing="-0.4" stroke="#000" stroke-width="0.35" font-family="Liberation Sans">Gesamtkosten</text><text x="81" y="68" font-size="8" text-anchor="start" letter-spacing="-0.2" stroke="#000" stroke-width="0.25" font-family="Liberation Sans">70.900,00</text><text x="119" y="65" font-size="8" text-anchor="start" letter-spacing="-0.2" stroke="#000" stroke-width="0.25" font-family="Liberation Sans">38.800,00</text><text x="158" y="80" font-size="8" text-anchor="start" letter-spacing="-0.2" stroke="#000" stroke-width="0.25" font-family="Liberation Sans">32.500,00</text><text x="103" y="227" font-size="8" text-anchor="start" letter-spacing="-0.2" stroke="#000" stroke-width="0.25" font-family="Liberation Sans">545.700,00</text><rect x="242.5" y="97.5" width="79" height="77" fill="#fff" stroke="#000"/><rect x="244.5" y="100.5" width="8" height="8" fill="#3cc864" stroke="#000"/><text x="255" y="108.0" font-size="8" text-anchor="start" letter-spacing="-0.2" stroke="#000" stroke-width="0.25" font-family="Liberation Sans">Grundstück</text><rect x="244.5" y="114.10000000000002" width="8" height="8" fill="#ff0000" stroke="#000"/><text x="255" y="121.60000000000002" font-size="8" text-anchor="start" letter-spacing="-0.2" stroke="#000" stroke-width="0.25" font-family="Liberation Sans">Gebäude</text><rect x="244.5" y="127.70000000000005" width="8" height="8" fill="#666633" stroke="#000"/><text x="255" y="135.20000000000005" font-size="8" text-anchor="start" letter-spacing="-0.2" stroke="#000" stroke-width="0.25" font-family="Liberation Sans">Umgebung</text><rect x="244.5" y="141.29999999999995" width="8" height="8" fill="#0000ff" stroke="#000"/><text x="255" y="148.79999999999995" font-size="8" text-anchor="start" letter-spacing="-0.2" stroke="#000" stroke-width="0.25" font-family="Liberation Sans">Baunebenkosten</text><text x="255" y="159.5" font-size="8" text-anchor="start" letter-spacing="-0.2" stroke="#000" stroke-width="0.25" font-family="Liberation Sans">und</text><text x="255" y="170.5" font-size="8" text-anchor="start" letter-spacing="-0.2" stroke="#000" stroke-width="0.25" font-family="Liberation Sans">Uebergangskonten</text></svg>
<svg style="position:absolute;left:631px;top:406px" width="348" height="278"><rect x="0" y="0" width="348" height="278" fill="#fff"/><path d="M131,149.79999999999995 L131.00,76.20 A72,73.6 0 0 1 173.65,90.50 Z" fill="#666633" stroke="#000" stroke-width="1"/><path d="M131,149.79999999999995 L173.65,90.50 A72,73.6 0 0 1 190.84,108.86 Z" fill="#3cc864" stroke="#000" stroke-width="1"/><path d="M131,149.79999999999995 L190.84,108.86 A72,73.6 0 0 1 201.93,137.15 Z" fill="#ffff80" stroke="#000" stroke-width="1"/><path d="M131,149.79999999999995 L201.93,137.15 A72,73.6 0 0 1 197.94,176.91 Z" fill="#a0a0a4" stroke="#000" stroke-width="1"/><path d="M131,149.79999999999995 L197.94,176.91 A72,73.6 0 0 1 187.64,195.25 Z" fill="#ff0000" stroke="#000" stroke-width="1"/><path d="M131,149.79999999999995 L187.64,195.25 A72,73.6 0 0 1 177.83,205.70 Z" fill="#333399" stroke="#000" stroke-width="1"/><path d="M131,149.79999999999995 L177.83,205.70 A72,73.6 0 0 1 103.26,217.72 Z" fill="#00ff00" stroke="#000" stroke-width="1"/><path d="M131,149.79999999999995 L103.26,217.72 A72,73.6 0 0 1 131.00,76.20 Z" fill="#0000ff" stroke="#000" stroke-width="1"/><text x="183.5" y="23.5" font-size="18" text-anchor="middle" letter-spacing="-0.4" stroke="#000" stroke-width="0.35" font-family="Liberation Sans">Gebäudekosten</text><text x="139" y="70" font-size="8" text-anchor="start" letter-spacing="-0.2" stroke="#000" stroke-width="0.25" font-family="Liberation Sans">46.400,00</text><text x="189" y="97" font-size="8" text-anchor="start" letter-spacing="-0.2" stroke="#000" stroke-width="0.25" font-family="Liberation Sans">25.403,50</text><text x="205" y="123" font-size="8" text-anchor="start" letter-spacing="-0.2" stroke="#000" stroke-width="0.25" font-family="Liberation Sans">30.529,65</text><text x="210" y="162" font-size="8" text-anchor="start" letter-spacing="-0.2" stroke="#000" stroke-width="0.25" font-family="Liberation Sans">40.250,00</text><text x="200" y="198.5" font-size="8" text-anchor="start" letter-spacing="-0.2" stroke="#000" stroke-width="0.25" font-family="Liberation Sans">21.100,00</text><text x="189" y="215" font-size="8" text-anchor="start" letter-spacing="-0.2" stroke="#000" stroke-width="0.25" font-family="Liberation Sans">14.424,50</text><text x="126" y="238.5" font-size="8" text-anchor="start" letter-spacing="-0.2" stroke="#000" stroke-width="0.25" font-family="Liberation Sans">80.788,35</text><text x="16" y="136.5" font-size="8" text-anchor="start" letter-spacing="-0.2" stroke="#000" stroke-width="0.25" font-family="Liberation Sans">200.992,15</text><rect x="269.5" y="79.5" width="90" height="120" fill="#fff" stroke="#000"/><rect x="271.5" y="82.10000000000002" width="8" height="8" fill="#0000ff" stroke="#000"/><text x="282" y="89.60000000000002" font-size="8" text-anchor="start" letter-spacing="-0.2" stroke="#000" stroke-width="0.25" font-family="Liberation Sans">Rohbau1</text><rect x="271.5" y="95.5" width="8" height="8" fill="#00ff00" stroke="#000"/><text x="282" y="103" font-size="8" text-anchor="start" letter-spacing="-0.2" stroke="#000" stroke-width="0.25" font-family="Liberation Sans">Rohbau2</text><rect x="271.5" y="109.10000000000002" width="8" height="8" fill="#333399" stroke="#000"/><text x="282" y="116.60000000000002" font-size="8" text-anchor="start" letter-spacing="-0.2" stroke="#000" stroke-width="0.25" font-family="Liberation Sans">Elektroanlagen</text><rect x="271.5" y="122.20000000000005" width="8" height="8" fill="#ff0000" stroke="#000"/><text x="282" y="129.70000000000005" font-size="8" text-anchor="start" letter-spacing="-0.2" stroke="#000" stroke-width="0.25" font-family="Liberation Sans">Heizungs-, Lüftung</text><rect x="271.5" y="146.20000000000005" width="8" height="8" fill="#a0a0a4" stroke="#000"/><text x="282" y="153.70000000000005" font-size="8" text-anchor="start" letter-spacing="-0.2" stroke="#000" stroke-width="0.25" font-family="Liberation Sans">Sanitäranlagen</text><rect x="271.5" y="159.5" width="8" height="8" fill="#ffff80" stroke="#000"/><text x="282" y="167" font-size="8" text-anchor="start" letter-spacing="-0.2" stroke="#000" stroke-width="0.25" font-family="Liberation Sans">Ausbau1</text><rect x="271.5" y="173.5" width="8" height="8" fill="#3cc864" stroke="#000"/><text x="282" y="181" font-size="8" text-anchor="start" letter-spacing="-0.2" stroke="#000" stroke-width="0.25" font-family="Liberation Sans">Ausbau2</text><rect x="271.5" y="187.5" width="8" height="8" fill="#666633" stroke="#000"/><text x="282" y="195" font-size="8" text-anchor="start" letter-spacing="-0.2" stroke="#000" stroke-width="0.25" font-family="Liberation Sans">Honorare</text><text x="282" y="140.5" font-size="8" text-anchor="start" letter-spacing="-0.2" stroke="#000" stroke-width="0.25" font-family="Liberation Sans">, Klimaanlagen</text></svg><svg style="position:absolute;left:0;top:0" width="1014" height="768" shape-rendering="crispEdges"><polygon points="7,8 10,8 21,19 18,19" fill="#ff0000"/><path d="M8,19 L20,8" fill="none" stroke="#ff0000" stroke-width="1" /><rect x="27" y="11" width="7" height="2" fill="#c0d0ff"/><rect x="27" y="11" width="1" height="3" fill="#202850"/><rect x="945" y="11" width="9" height="1" fill="#7f9ff4"/><rect x="945" y="11" width="1" height="4" fill="#7f9ff4"/><rect x="945" y="15" width="10" height="1" fill="#202848"/><rect x="954" y="11" width="1" height="5" fill="#202848"/><path d="M962,9.5 L971,9.5" fill="none" stroke="#7f9ff4" stroke-width="1" /><path d="M962.5,9.5 L966.5,17" fill="none" stroke="#7f9ff4" stroke-width="1" /><path d="M971,9.5 L967,17.5" fill="none" stroke="#202848" stroke-width="1.2" /><rect x="979" y="9" width="9" height="1" fill="#7f9ff4"/><rect x="979" y="9" width="1" height="9" fill="#7f9ff4"/><rect x="979" y="17" width="10" height="1" fill="#202848"/><rect x="988" y="9" width="1" height="9" fill="#202848"/><g shape-rendering="geometricPrecision"><path d="M996,9 L1005,18 M1005,9 L996,18" fill="none" stroke="#202848" stroke-width="3" /><path d="M996,9 L1005,18 M1005,9 L996,18" fill="none" stroke="#4060d0" stroke-width="1.2" /><path d="M995.5,9.5 L999,13 M1005,8.5 L1001.5,12" fill="none" stroke="#7f9ff4" stroke-width="1" /></g><rect x="962" y="33" width="8" height="2" fill="#000"/><rect x="978.5" y="30.5" width="6" height="5" fill="none" stroke="#000" stroke-width="1"/><rect x="978.5" y="30.5" width="6" height="1.5" fill="#000"/><rect x="981.5" y="27.5" width="6" height="5" fill="none" stroke="#000" stroke-width="1"/><rect x="981.5" y="27.5" width="6" height="1.5" fill="#000"/><path d="M995,27 L1002,34 M1002,27 L995,34" fill="none" stroke="#000" stroke-width="1.5" /><polygon points="322,54 330,54 326,58" fill="#000"/><polygon points="241,82 249,82 245,86" fill="#000"/><polygon points="294,82 302,82 298,86" fill="#000"/><polygon points="269,110 277,110 273,114" fill="#000"/><path d="M13,51 L19,51 L21,53 L29,53 L29,65 L13,65 Z" fill="#ffff00" stroke="#808080" stroke-width="1" /><rect x="14" y="54" width="15" height="10" fill="#ffff00"/><rect x="14" y="54" width="1" height="1" fill="#c0c0a0"/><rect x="16" y="54" width="1" height="1" fill="#c0c0a0"/><rect x="18" y="54" width="1" height="1" fill="#c0c0a0"/><rect x="20" y="54" width="1" height="1" fill="#c0c0a0"/><rect x="22" y="54" width="1" height="1" fill="#c0c0a0"/><rect x="24" y="54" width="1" height="1" fill="#c0c0a0"/><rect x="26" y="54" width="1" height="1" fill="#c0c0a0"/><rect x="28" y="54" width="1" height="1" fill="#c0c0a0"/><rect x="15" y="55" width="1" height="1" fill="#c0c0a0"/><rect x="17" y="55" width="1" height="1" fill="#c0c0a0"/><rect x="19" y="55" width="1" height="1" fill="#c0c0a0"/><rect x="21" y="55" width="1" height="1" fill="#c0c0a0"/><rect x="23" y="55" width="1" height="1" fill="#c0c0a0"/><rect x="25" y="55" width="1" height="1" fill="#c0c0a0"/><rect x="27" y="55" width="1" height="1" fill="#c0c0a0"/><rect x="14" y="56" width="1" height="1" fill="#c0c0a0"/><rect x="16" y="56" width="1" height="1" fill="#c0c0a0"/><rect x="18" y="56" width="1" height="1" fill="#c0c0a0"/><rect x="20" y="56" width="1" height="1" fill="#c0c0a0"/><rect x="22" y="56" width="1" height="1" fill="#c0c0a0"/><rect x="24" y="56" width="1" height="1" fill="#c0c0a0"/><rect x="26" y="56" width="1" height="1" fill="#c0c0a0"/><rect x="28" y="56" width="1" height="1" fill="#c0c0a0"/><rect x="15" y="57" width="1" height="1" fill="#c0c0a0"/><rect x="17" y="57" width="1" height="1" fill="#c0c0a0"/><rect x="19" y="57" width="1" height="1" fill="#c0c0a0"/><rect x="21" y="57" width="1" height="1" fill="#c0c0a0"/><rect x="23" y="57" width="1" height="1" fill="#c0c0a0"/><rect x="25" y="57" width="1" height="1" fill="#c0c0a0"/><rect x="27" y="57" width="1" height="1" fill="#c0c0a0"/><rect x="14" y="58" width="1" height="1" fill="#c0c0a0"/><rect x="16" y="58" width="1" height="1" fill="#c0c0a0"/><rect x="18" y="58" width="1" height="1" fill="#c0c0a0"/><rect x="20" y="58" width="1" height="1" fill="#c0c0a0"/><rect x="22" y="58" width="1" height="1" fill="#c0c0a0"/><rect x="24" y="58" width="1" height="1" fill="#c0c0a0"/><rect x="26" y="58" width="1" height="1" fill="#c0c0a0"/><rect x="28" y="58" width="1" height="1" fill="#c0c0a0"/><rect x="15" y="59" width="1" height="1" fill="#c0c0a0"/><rect x="17" y="59" width="1" height="1" fill="#c0c0a0"/><rect x="19" y="59" width="1" height="1" fill="#c0c0a0"/><rect x="21" y="59" width="1" height="1" fill="#c0c0a0"/><rect x="23" y="59" width="1" height="1" fill="#c0c0a0"/><rect x="25" y="59" width="1" height="1" fill="#c0c0a0"/><rect x="27" y="59" width="1" height="1" fill="#c0c0a0"/><rect x="14" y="60" width="1" height="1" fill="#c0c0a0"/><rect x="16" y="60" width="1" height="1" fill="#c0c0a0"/><rect x="18" y="60" width="1" height="1" fill="#c0c0a0"/><rect x="20" y="60" width="1" height="1" fill="#c0c0a0"/><rect x="22" y="60" width="1" height="1" fill="#c0c0a0"/><rect x="24" y="60" width="1" height="1" fill="#c0c0a0"/><rect x="26" y="60" width="1" height="1" fill="#c0c0a0"/><rect x="28" y="60" width="1" height="1" fill="#c0c0a0"/><rect x="15" y="61" width="1" height="1" fill="#c0c0a0"/><rect x="17" y="61" width="1" height="1" fill="#c0c0a0"/><rect x="19" y="61" width="1" height="1" fill="#c0c0a0"/><rect x="21" y="61" width="1" height="1" fill="#c0c0a0"/><rect x="23" y="61" width="1" height="1" fill="#c0c0a0"/><rect x="25" y="61" width="1" height="1" fill="#c0c0a0"/><rect x="27" y="61" width="1" height="1" fill="#c0c0a0"/><rect x="14" y="62" width="1" height="1" fill="#c0c0a0"/><rect x="16" y="62" width="1" height="1" fill="#c0c0a0"/><rect x="18" y="62" width="1" height="1" fill="#c0c0a0"/><rect x="20" y="62" width="1" height="1" fill="#c0c0a0"/><rect x="22" y="62" width="1" height="1" fill="#c0c0a0"/><rect x="24" y="62" width="1" height="1" fill="#c0c0a0"/><rect x="26" y="62" width="1" height="1" fill="#c0c0a0"/><rect x="28" y="62" width="1" height="1" fill="#c0c0a0"/><rect x="15" y="63" width="1" height="1" fill="#c0c0a0"/><rect x="17" y="63" width="1" height="1" fill="#c0c0a0"/><rect x="19" y="63" width="1" height="1" fill="#c0c0a0"/><rect x="21" y="63" width="1" height="1" fill="#c0c0a0"/><rect x="23" y="63" width="1" height="1" fill="#c0c0a0"/><rect x="25" y="63" width="1" height="1" fill="#c0c0a0"/><rect x="27" y="63" width="1" height="1" fill="#c0c0a0"/><rect x="13" y="64" width="17" height="1" fill="#000"/><rect x="29" y="53" width="1" height="12" fill="#000"/><rect x="27" y="47" width="1" height="12" fill="#000"/><polygon points="28,47 32,49 28,51" fill="#000"/><polygon points="350,55.5 355,50 355,53 360.5,53 360.5,58 355,58 355,61" fill="#1b6068"/><path d="M355,61 L360.5,58" fill="none" stroke="#fff" stroke-width="1" /><polygon points="384.5,55.5 379,50 379,53 374,53 374,58 379,58 379,61" fill="#1b6068"/><path d="M379,61 L384.5,55.5" fill="none" stroke="#fff" stroke-width="1" /><polygon points="397.5,48.5 404.5,48.5 409,53 409,59.5 404.5,64 397.5,64 393,59.5 393,53" fill="none" stroke="#1b6068" stroke-width="1"/><polygon points="398,50.5 404,50.5 407,53.5 407,59 404,62 398,62 395,59 395,53.5" fill="#1b6068" stroke="#fff" stroke-width="1"/><polygon points="424,48.5 417.5,55.5 419.5,55.5 419.5,62 428.5,62 428.5,55.5 430.5,55.5" fill="#fff" stroke="#000" stroke-width="1.2"/><path d="M418,55 L424,49 L430,55" fill="none" stroke="#a00000" stroke-width="1.5" /><rect x="428" y="49" width="2" height="4" fill="#000"/><rect x="422.5" y="57.5" width="3" height="4.5" fill="none" stroke="#000080" stroke-width="1"/><rect x="438" y="45" width="1" height="22" fill="#1b6068"/><rect x="439" y="45" width="1" height="22" fill="#fff"/><path d="M448,59 C447,53 451,50 455,50" fill="none" stroke="#000080" stroke-width="2" /><polygon points="446,57 451,57 448.5,61" fill="#000080"/><polygon points="455,48 461,51 458,56 452,53" fill="#fff" stroke="#606060" stroke-width="0.8"/><path d="M457,53 L459,59" fill="none" stroke="#000080" stroke-width="1.5" /><circle cx="459" cy="61" r="2" fill="#fff" stroke="#000080" stroke-width="1.3"/><rect x="467" y="45" width="23" height="1" fill="#1b6068"/><rect x="467" y="45" width="1" height="22" fill="#1b6068"/><rect x="467" y="66" width="23" height="1" fill="#fff"/><rect x="489" y="45" width="1" height="22" fill="#fff"/><rect x="471.5" y="51.5" width="9" height="10" fill="#fff" stroke="#000" stroke-width="1"/><rect x="473" y="53" width="2" height="2" fill="#000080"/><rect x="476" y="53" width="3" height="1" fill="#404040"/><rect x="473" y="56" width="2" height="1" fill="#404040"/><rect x="476" y="56" width="3" height="1" fill="#404040"/><rect x="473" y="58" width="2" height="1" fill="#404040"/><rect x="476" y="58" width="3" height="1" fill="#404040"/><path d="M481,61 L487,53" fill="none" stroke="#000080" stroke-width="2" /><path d="M481,61 L482,59" fill="none" stroke="#fff" stroke-width="1" /><rect x="492" y="45" width="1" height="22" fill="#1b6068"/><rect x="493" y="45" width="1" height="22" fill="#fff"/><path d="M503,52 L507,52 L508,53 L513,53 L513,56 L506,56 L502,62 Z" fill="#ffff00" stroke="#000" stroke-width="1" /><polygon points="506,56 517,56 513,62 502,62" fill="#a0a000" stroke="#000" stroke-width="1"/><path d="M508,50 C510,47 514,47 515,51" fill="none" stroke="#1b6068" stroke-width="1.2" /><rect x="526" y="49" width="13" height="14" fill="#1b6068"/><rect x="528.5" y="50" width="8" height="5" fill="#fff"/><rect x="532" y="59" width="2" height="3" fill="#fff"/><rect x="526" y="62" width="13" height="1" fill="#fff"/><rect x="549.5" y="51.5" width="13" height="9" fill="#fff" stroke="#1b6068" stroke-width="1"/><rect x="551" y="53" width="10" height="6" fill="#1b6068"/><rect x="552" y="54" width="2" height="3" fill="#fff"/><rect x="555" y="54" width="2" height="3" fill="#fff"/><rect x="558" y="54" width="2" height="3" fill="#fff"/><rect x="546" y="52" width="2" height="1" fill="#1b6068"/><rect x="546" y="55" width="2" height="1" fill="#1b6068"/><rect x="546" y="58" width="2" height="1" fill="#1b6068"/><polygon points="573,49 583,49 582,54 572,54" fill="#fff" stroke="#000" stroke-width="1"/><path d="M570,56 L586,56 L588,59 L588,62 L570,62 Z" fill="#303030" stroke="#000" stroke-width="1" /><rect x="571" y="57" width="15" height="1" fill="#ffff00"/><rect x="571" y="60" width="15" height="1" fill="#ffff00"/><rect x="592" y="45" width="1" height="22" fill="#1b6068"/><rect x="593" y="45" width="1" height="22" fill="#fff"/><path d="M606,48 L611,58 M611,48 L606,58" fill="none" stroke="#000080" stroke-width="1.3" /><circle cx="605" cy="60" r="2.3" fill="none" stroke="#000080" stroke-width="1.2"/><circle cx="612" cy="60" r="2.3" fill="none" stroke="#000080" stroke-width="1.2"/><rect x="625.5" y="48.5" width="8" height="10" fill="#fff" stroke="#000080" stroke-width="1.5"/><rect x="630.5" y="52.5" width="9" height="10" fill="#fff" stroke="#000080" stroke-width="1.5"/><rect x="627" y="51" width="4" height="1" fill="#000"/><rect x="627" y="53" width="3" height="1" fill="#000"/><rect x="632" y="56" width="5" height="1" fill="#000"/><rect x="632" y="58" width="5" height="1" fill="#000"/><rect x="648.5" y="49.5" width="12" height="12" fill="#a09850" stroke="#000" stroke-width="1"/><rect x="649" y="50" width="11" height="11" fill="#c8c080"/><rect x="650" y="50" width="1" height="1" fill="#707040"/><rect x="652" y="50" width="1" height="1" fill="#707040"/><rect x="654" y="50" width="1" height="1" fill="#707040"/><rect x="656" y="50" width="1" height="1" fill="#707040"/><rect x="658" y="50" width="1" height="1" fill="#707040"/><rect x="649" y="51" width="1" height="1" fill="#707040"/><rect x="651" y="51" width="1" height="1" fill="#707040"/><rect x="653" y="51" width="1" height="1" fill="#707040"/><rect x="655" y="51" width="1" height="1" fill="#707040"/><rect x="657" y="51" width="1" height="1" fill="#707040"/><rect x="659" y="51" width="1" height="1" fill="#707040"/><rect x="650" y="52" width="1" height="1" fill="#707040"/><rect x="652" y="52" width="1" height="1" fill="#707040"/><rect x="654" y="52" width="1" height="1" fill="#707040"/><rect x="656" y="52" width="1" height="1" fill="#707040"/><rect x="658" y="52" width="1" height="1" fill="#707040"/><rect x="649" y="53" width="1" height="1" fill="#707040"/><rect x="651" y="53" width="1" height="1" fill="#707040"/><rect x="653" y="53" width="1" height="1" fill="#707040"/><rect x="655" y="53" width="1" height="1" fill="#707040"/><rect x="657" y="53" width="1" height="1" fill="#707040"/><rect x="659" y="53" width="1" height="1" fill="#707040"/><rect x="650" y="54" width="1" height="1" fill="#707040"/><rect x="652" y="54" width="1" height="1" fill="#707040"/><rect x="654" y="54" width="1" height="1" fill="#707040"/><rect x="656" y="54" width="1" height="1" fill="#707040"/><rect x="658" y="54" width="1" height="1" fill="#707040"/><rect x="649" y="55" width="1" height="1" fill="#707040"/><rect x="651" y="55" width="1" height="1" fill="#707040"/><rect x="653" y="55" width="1" height="1" fill="#707040"/><rect x="655" y="55" width="1" height="1" fill="#707040"/><rect x="657" y="55" width="1" height="1" fill="#707040"/><rect x="659" y="55" width="1" height="1" fill="#707040"/><rect x="650" y="56" width="1" height="1" fill="#707040"/><rect x="652" y="56" width="1" height="1" fill="#707040"/><rect x="654" y="56" width="1" height="1" fill="#707040"/><rect x="656" y="56" width="1" height="1" fill="#707040"/><rect x="658" y="56" width="1" height="1" fill="#707040"/><rect x="649" y="57" width="1" height="1" fill="#707040"/><rect x="651" y="57" width="1" height="1" fill="#707040"/><rect x="653" y="57" width="1" height="1" fill="#707040"/><rect x="655" y="57" width="1" height="1" fill="#707040"/><rect x="657" y="57" width="1" height="1" fill="#707040"/><rect x="659" y="57" width="1" height="1" fill="#707040"/><rect x="650" y="58" width="1" height="1" fill="#707040"/><rect x="652" y="58" width="1" height="1" fill="#707040"/><rect x="654" y="58" width="1" height="1" fill="#707040"/><rect x="656" y="58" width="1" height="1" fill="#707040"/><rect x="658" y="58" width="1" height="1" fill="#707040"/><rect x="649" y="59" width="1" height="1" fill="#707040"/><rect x="651" y="59" width="1" height="1" fill="#707040"/><rect x="653" y="59" width="1" height="1" fill="#707040"/><rect x="655" y="59" width="1" height="1" fill="#707040"/><rect x="657" y="59" width="1" height="1" fill="#707040"/><rect x="659" y="59" width="1" height="1" fill="#707040"/><rect x="650" y="60" width="1" height="1" fill="#707040"/><rect x="652" y="60" width="1" height="1" fill="#707040"/><rect x="654" y="60" width="1" height="1" fill="#707040"/><rect x="656" y="60" width="1" height="1" fill="#707040"/><rect x="658" y="60" width="1" height="1" fill="#707040"/><rect x="652" y="48" width="5" height="3" fill="#ffff00" stroke="#000" stroke-width="0.8"/><rect x="655.5" y="54.5" width="8" height="7" fill="#fff" stroke="#000080" stroke-width="1.5"/><rect x="657" y="57" width="4" height="1" fill="#000"/><rect x="670" y="45" width="1" height="22" fill="#1b6068"/><rect x="671" y="45" width="1" height="22" fill="#fff"/><path d="M683,52.5 L691,52.5 C695,52.5 695,58.5 691,58.5 L683,58.5" fill="none" stroke="#1b6068" stroke-width="2" /><polygon points="679,58.5 684,55 684,62" fill="#1b6068"/><path d="M706,52.5 L714,52.5 C718,52.5 718,58.5 714,58.5 L710,58.5" fill="none" stroke="#1b6068" stroke-width="2" /><polygon points="707,55.5 702,52 702,59" fill="#1b6068"/><rect x="702" y="55" width="4" height="1" fill="#1b6068"/><rect x="723" y="45" width="1" height="22" fill="#1b6068"/><rect x="724" y="45" width="1" height="22" fill="#fff"/><rect x="729" y="45" width="23" height="1" fill="#1b6068"/><rect x="729" y="45" width="1" height="22" fill="#1b6068"/><rect x="729" y="66" width="23" height="1" fill="#fff"/><rect x="751" y="45" width="1" height="22" fill="#fff"/><path d="M734,51 L740,52 L746,51 L746,62 L740,63 L734,62 Z" fill="#ffff00" stroke="#000" stroke-width="1" /><rect x="735" y="52" width="5" height="10" fill="#ffff00"/><rect x="736" y="52" width="1" height="1" fill="#fff"/><rect x="738" y="52" width="1" height="1" fill="#fff"/><rect x="735" y="53" width="1" height="1" fill="#fff"/><rect x="737" y="53" width="1" height="1" fill="#fff"/><rect x="739" y="53" width="1" height="1" fill="#fff"/><rect x="736" y="54" width="1" height="1" fill="#fff"/><rect x="738" y="54" width="1" height="1" fill="#fff"/><rect x="735" y="55" width="1" height="1" fill="#fff"/><rect x="737" y="55" width="1" height="1" fill="#fff"/><rect x="739" y="55" width="1" height="1" fill="#fff"/><rect x="736" y="56" width="1" height="1" fill="#fff"/><rect x="738" y="56" width="1" height="1" fill="#fff"/><rect x="735" y="57" width="1" height="1" fill="#fff"/><rect x="737" y="57" width="1" height="1" fill="#fff"/><rect x="739" y="57" width="1" height="1" fill="#fff"/><rect x="736" y="58" width="1" height="1" fill="#fff"/><rect x="738" y="58" width="1" height="1" fill="#fff"/><rect x="735" y="59" width="1" height="1" fill="#fff"/><rect x="737" y="59" width="1" height="1" fill="#fff"/><rect x="739" y="59" width="1" height="1" fill="#fff"/><rect x="736" y="60" width="1" height="1" fill="#fff"/><rect x="738" y="60" width="1" height="1" fill="#fff"/><rect x="735" y="61" width="1" height="1" fill="#fff"/><rect x="737" y="61" width="1" height="1" fill="#fff"/><rect x="739" y="61" width="1" height="1" fill="#fff"/><rect x="740" y="52" width="1" height="11" fill="#000"/><rect x="743" y="52" width="1" height="10" fill="#00c0c0"/><rect x="745" y="52" width="1" height="10" fill="#00a000"/><rect x="757.5" y="50.5" width="11" height="11" fill="#ffff00" stroke="#000" stroke-width="1"/><rect x="758" y="51" width="10" height="10" fill="#ffff00"/><rect x="759" y="51" width="1" height="1" fill="#fff"/><rect x="761" y="51" width="1" height="1" fill="#fff"/><rect x="763" y="51" width="1" height="1" fill="#fff"/><rect x="765" y="51" width="1" height="1" fill="#fff"/><rect x="767" y="51" width="1" height="1" fill="#fff"/><rect x="758" y="52" width="1" height="1" fill="#fff"/><rect x="760" y="52" width="1" height="1" fill="#fff"/><rect x="762" y="52" width="1" height="1" fill="#fff"/><rect x="764" y="52" width="1" height="1" fill="#fff"/><rect x="766" y="52" width="1" height="1" fill="#fff"/><rect x="759" y="53" width="1" height="1" fill="#fff"/><rect x="761" y="53" width="1" height="1" fill="#fff"/><rect x="763" y="53" width="1" height="1" fill="#fff"/><rect x="765" y="53" width="1" height="1" fill="#fff"/><rect x="767" y="53" width="1" height="1" fill="#fff"/><rect x="758" y="54" width="1" height="1" fill="#fff"/><rect x="760" y="54" width="1" height="1" fill="#fff"/><rect x="762" y="54" width="1" height="1" fill="#fff"/><rect x="764" y="54" width="1" height="1" fill="#fff"/><rect x="766" y="54" width="1" height="1" fill="#fff"/><rect x="759" y="55" width="1" height="1" fill="#fff"/><rect x="761" y="55" width="1" height="1" fill="#fff"/><rect x="763" y="55" width="1" height="1" fill="#fff"/><rect x="765" y="55" width="1" height="1" fill="#fff"/><rect x="767" y="55" width="1" height="1" fill="#fff"/><rect x="758" y="56" width="1" height="1" fill="#fff"/><rect x="760" y="56" width="1" height="1" fill="#fff"/><rect x="762" y="56" width="1" height="1" fill="#fff"/><rect x="764" y="56" width="1" height="1" fill="#fff"/><rect x="766" y="56" width="1" height="1" fill="#fff"/><rect x="759" y="57" width="1" height="1" fill="#fff"/><rect x="761" y="57" width="1" height="1" fill="#fff"/><rect x="763" y="57" width="1" height="1" fill="#fff"/><rect x="765" y="57" width="1" height="1" fill="#fff"/><rect x="767" y="57" width="1" height="1" fill="#fff"/><rect x="758" y="58" width="1" height="1" fill="#fff"/><rect x="760" y="58" width="1" height="1" fill="#fff"/><rect x="762" y="58" width="1" height="1" fill="#fff"/><rect x="764" y="58" width="1" height="1" fill="#fff"/><rect x="766" y="58" width="1" height="1" fill="#fff"/><rect x="759" y="59" width="1" height="1" fill="#fff"/><rect x="761" y="59" width="1" height="1" fill="#fff"/><rect x="763" y="59" width="1" height="1" fill="#fff"/><rect x="765" y="59" width="1" height="1" fill="#fff"/><rect x="767" y="59" width="1" height="1" fill="#fff"/><rect x="758" y="60" width="1" height="1" fill="#fff"/><rect x="760" y="60" width="1" height="1" fill="#fff"/><rect x="762" y="60" width="1" height="1" fill="#fff"/><rect x="764" y="60" width="1" height="1" fill="#fff"/><rect x="766" y="60" width="1" height="1" fill="#fff"/><rect x="762.5" y="50" width="1" height="12" fill="#000"/><rect x="759" y="54" width="3" height="1" fill="#000"/><rect x="764" y="54" width="3" height="1" fill="#000"/><rect x="759" y="57" width="3" height="1" fill="#000"/><rect x="764" y="57" width="3" height="1" fill="#000"/><rect x="757" y="61" width="12" height="1.3" fill="#000"/><path d="M777.5,56 L794.5,56 M786,48 L786,64" fill="none" stroke="#000" stroke-width="1.2" /><polygon points="786,52 789,56 786,60 783,56" fill="none" stroke="#000080" stroke-width="1"/><rect x="779" y="55" width="4" height="1" fill="#fff"/><rect x="788" y="57" width="4" height="1" fill="#fff"/><rect x="785" y="49" width="1" height="4" fill="#303090"/><rect x="787" y="59" width="1" height="4" fill="#303090"/><rect x="803" y="52" width="1" height="7" fill="#808080"/><rect x="800" y="55" width="7" height="1" fill="#808080"/><rect x="802" y="60" width="3" height="3" fill="#1b6068" stroke="#000" stroke-width="0.8"/><rect x="809" y="60" width="3" height="3" fill="#000080" stroke="#000" stroke-width="0.8"/><path d="M810,59 L810,53" fill="none" stroke="#000" stroke-width="1.5" /><rect x="809" y="48" width="10" height="6" fill="#ffff00"/><rect x="810" y="48" width="1" height="1" fill="#fff"/><rect x="812" y="48" width="1" height="1" fill="#fff"/><rect x="814" y="48" width="1" height="1" fill="#fff"/><rect x="816" y="48" width="1" height="1" fill="#fff"/><rect x="818" y="48" width="1" height="1" fill="#fff"/><rect x="809" y="49" width="1" height="1" fill="#fff"/><rect x="811" y="49" width="1" height="1" fill="#fff"/><rect x="813" y="49" width="1" height="1" fill="#fff"/><rect x="815" y="49" width="1" height="1" fill="#fff"/><rect x="817" y="49" width="1" height="1" fill="#fff"/><rect x="810" y="50" width="1" height="1" fill="#fff"/><rect x="812" y="50" width="1" height="1" fill="#fff"/><rect x="814" y="50" width="1" height="1" fill="#fff"/><rect x="816" y="50" width="1" height="1" fill="#fff"/><rect x="818" y="50" width="1" height="1" fill="#fff"/><rect x="809" y="51" width="1" height="1" fill="#fff"/><rect x="811" y="51" width="1" height="1" fill="#fff"/><rect x="813" y="51" width="1" height="1" fill="#fff"/><rect x="815" y="51" width="1" height="1" fill="#fff"/><rect x="817" y="51" width="1" height="1" fill="#fff"/><rect x="810" y="52" width="1" height="1" fill="#fff"/><rect x="812" y="52" width="1" height="1" fill="#fff"/><rect x="814" y="52" width="1" height="1" fill="#fff"/><rect x="816" y="52" width="1" height="1" fill="#fff"/><rect x="818" y="52" width="1" height="1" fill="#fff"/><rect x="809" y="53" width="1" height="1" fill="#fff"/><rect x="811" y="53" width="1" height="1" fill="#fff"/><rect x="813" y="53" width="1" height="1" fill="#fff"/><rect x="815" y="53" width="1" height="1" fill="#fff"/><rect x="817" y="53" width="1" height="1" fill="#fff"/><path d="M812,56 L818,52" fill="none" stroke="#000" stroke-width="1" /><rect x="824.5" y="48.5" width="9" height="11" fill="#fff" stroke="#808080" stroke-width="1"/><rect x="826" y="51" width="5" height="1" fill="#808080"/><rect x="826" y="53" width="5" height="1" fill="#808080"/><rect x="826" y="55" width="5" height="1" fill="#808080"/><circle cx="834.5" cy="58" r="5" fill="#00a000" stroke="#000" stroke-width="0.8"/><path d="M831,56 L834,54 L837,57 L835,61 Z" fill="#0000c0" /><path d="M855,47.5 C861,47.5 863,51 863,54 C863,58 859,61 855,61 L853,61 L851,65 L851,60.5 C848,59 847,57 847,54 C847,51 850,47.5 855,47.5 Z" fill="#ffff00" stroke="#000" stroke-width="1" /><rect x="848" y="49" width="14" height="11" fill="#ffff00"/><rect x="849" y="49" width="1" height="1" fill="#fff"/><rect x="851" y="49" width="1" height="1" fill="#fff"/><rect x="853" y="49" width="1" height="1" fill="#fff"/><rect x="855" y="49" width="1" height="1" fill="#fff"/><rect x="857" y="49" width="1" height="1" fill="#fff"/><rect x="859" y="49" width="1" height="1" fill="#fff"/><rect x="861" y="49" width="1" height="1" fill="#fff"/><rect x="848" y="50" width="1" height="1" fill="#fff"/><rect x="850" y="50" width="1" height="1" fill="#fff"/><rect x="852" y="50" width="1" height="1" fill="#fff"/><rect x="854" y="50" width="1" height="1" fill="#fff"/><rect x="856" y="50" width="1" height="1" fill="#fff"/><rect x="858" y="50" width="1" height="1" fill="#fff"/><rect x="860" y="50" width="1" height="1" fill="#fff"/><rect x="849" y="51" width="1" height="1" fill="#fff"/><rect x="851" y="51" width="1" height="1" fill="#fff"/><rect x="853" y="51" width="1" height="1" fill="#fff"/><rect x="855" y="51" width="1" height="1" fill="#fff"/><rect x="857" y="51" width="1" height="1" fill="#fff"/><rect x="859" y="51" width="1" height="1" fill="#fff"/><rect x="861" y="51" width="1" height="1" fill="#fff"/><rect x="848" y="52" width="1" height="1" fill="#fff"/><rect x="850" y="52" width="1" height="1" fill="#fff"/><rect x="852" y="52" width="1" height="1" fill="#fff"/><rect x="854" y="52" width="1" height="1" fill="#fff"/><rect x="856" y="52" width="1" height="1" fill="#fff"/><rect x="858" y="52" width="1" height="1" fill="#fff"/><rect x="860" y="52" width="1" height="1" fill="#fff"/><rect x="849" y="53" width="1" height="1" fill="#fff"/><rect x="851" y="53" width="1" height="1" fill="#fff"/><rect x="853" y="53" width="1" height="1" fill="#fff"/><rect x="855" y="53" width="1" height="1" fill="#fff"/><rect x="857" y="53" width="1" height="1" fill="#fff"/><rect x="859" y="53" width="1" height="1" fill="#fff"/><rect x="861" y="53" width="1" height="1" fill="#fff"/><rect x="848" y="54" width="1" height="1" fill="#fff"/><rect x="850" y="54" width="1" height="1" fill="#fff"/><rect x="852" y="54" width="1" height="1" fill="#fff"/><rect x="854" y="54" width="1" height="1" fill="#fff"/><rect x="856" y="54" width="1" height="1" fill="#fff"/><rect x="858" y="54" width="1" height="1" fill="#fff"/><rect x="860" y="54" width="1" height="1" fill="#fff"/><rect x="849" y="55" width="1" height="1" fill="#fff"/><rect x="851" y="55" width="1" height="1" fill="#fff"/><rect x="853" y="55" width="1" height="1" fill="#fff"/><rect x="855" y="55" width="1" height="1" fill="#fff"/><rect x="857" y="55" width="1" height="1" fill="#fff"/><rect x="859" y="55" width="1" height="1" fill="#fff"/><rect x="861" y="55" width="1" height="1" fill="#fff"/><rect x="848" y="56" width="1" height="1" fill="#fff"/><rect x="850" y="56" width="1" height="1" fill="#fff"/><rect x="852" y="56" width="1" height="1" fill="#fff"/><rect x="854" y="56" width="1" height="1" fill="#fff"/><rect x="856" y="56" width="1" height="1" fill="#fff"/><rect x="858" y="56" width="1" height="1" fill="#fff"/><rect x="860" y="56" width="1" height="1" fill="#fff"/><rect x="849" y="57" width="1" height="1" fill="#fff"/><rect x="851" y="57" width="1" height="1" fill="#fff"/><rect x="853" y="57" width="1" height="1" fill="#fff"/><rect x="855" y="57" width="1" height="1" fill="#fff"/><rect x="857" y="57" width="1" height="1" fill="#fff"/><rect x="859" y="57" width="1" height="1" fill="#fff"/><rect x="861" y="57" width="1" height="1" fill="#fff"/><rect x="848" y="58" width="1" height="1" fill="#fff"/><rect x="850" y="58" width="1" height="1" fill="#fff"/><rect x="852" y="58" width="1" height="1" fill="#fff"/><rect x="854" y="58" width="1" height="1" fill="#fff"/><rect x="856" y="58" width="1" height="1" fill="#fff"/><rect x="858" y="58" width="1" height="1" fill="#fff"/><rect x="860" y="58" width="1" height="1" fill="#fff"/><rect x="849" y="59" width="1" height="1" fill="#fff"/><rect x="851" y="59" width="1" height="1" fill="#fff"/><rect x="853" y="59" width="1" height="1" fill="#fff"/><rect x="855" y="59" width="1" height="1" fill="#fff"/><rect x="857" y="59" width="1" height="1" fill="#fff"/><rect x="859" y="59" width="1" height="1" fill="#fff"/><rect x="861" y="59" width="1" height="1" fill="#fff"/><path d="M855,47.5 C861,47.5 863,51 863,54 C863,58 859,61 855,61 L853,61 L851,65 L851,60.5 C848,59 847,57 847,54 C847,51 850,47.5 855,47.5 Z" fill="none" stroke="#000" stroke-width="1" /><text x="855" y="58.5" font-size="11" fill="#000080" font-weight="bold" font-style="normal" text-anchor="middle" font-family="Liberation Sans">?</text><rect x="870" y="45" width="1" height="22" fill="#1b6068"/><rect x="871" y="45" width="1" height="22" fill="#fff"/><rect x="875" y="45" width="23" height="1" fill="#1b6068"/><rect x="875" y="45" width="1" height="22" fill="#1b6068"/><rect x="875" y="66" width="23" height="1" fill="#fff"/><rect x="897" y="45" width="1" height="22" fill="#fff"/><circle cx="885.5" cy="55" r="5.5" fill="#00a000" stroke="#000" stroke-width="0.8"/><path d="M881,53 L885,50 L889,54 L887,59 L883,59 Z" fill="#0000c0" /><rect x="882" y="52" width="2" height="3" fill="#fff"/><path d="M887,59 L889,61 L894,55" fill="none" stroke="#000080" stroke-width="1.2" /><text x="320.5" y="87.5" font-size="15" fill="#000" font-weight="bold" font-style="normal" text-anchor="start" font-family="Liberation Serif">F</text><text x="345.5" y="87.5" font-size="15" fill="#000" font-weight="bold" font-style="italic" text-anchor="start" font-family="Liberation Serif">k</text><text x="368" y="87.5" font-size="12" fill="#000" font-weight="bold" font-style="normal" text-anchor="start" font-family="Liberation Sans">U</text><rect x="368" y="88" width="10" height="1" fill="#000"/><text x="390" y="88" font-size="12" fill="#000" font-weight="bold" font-style="normal" text-anchor="start" font-family="Liberation Sans">A</text><rect x="395" y="83" width="8" height="8" fill="#000"/><rect x="410" y="75" width="1" height="19" fill="#1b6068"/><rect x="411" y="75" width="1" height="19" fill="#fff"/><rect x="421" y="78.6" width="12" height="1.4" fill="#000"/><rect x="421" y="80.7" width="9" height="1.4" fill="#000"/><rect x="421" y="82.8" width="12" height="1.4" fill="#000"/><rect x="421" y="84.9" width="9" height="1.4" fill="#000"/><rect x="421" y="87" width="12" height="1.4" fill="#000"/><rect x="444" y="78.6" width="12" height="1.4" fill="#000"/><rect x="446" y="80.7" width="8" height="1.4" fill="#000"/><rect x="444" y="82.8" width="12" height="1.4" fill="#000"/><rect x="447" y="84.9" width="6" height="1.4" fill="#000"/><rect x="444" y="87" width="12" height="1.4" fill="#000"/><rect x="467" y="78.6" width="12" height="1.4" fill="#000"/><rect x="470" y="80.7" width="9" height="1.4" fill="#000"/><rect x="467" y="82.8" width="12" height="1.4" fill="#000"/><rect x="470" y="84.9" width="9" height="1.4" fill="#000"/><rect x="467" y="87" width="12" height="1.4" fill="#000"/><rect x="490" y="78.6" width="12" height="1.4" fill="#000"/><rect x="490" y="80.7" width="12" height="1.4" fill="#000"/><rect x="490" y="82.8" width="12" height="1.4" fill="#000"/><rect x="490" y="84.9" width="12" height="1.4" fill="#000"/><rect x="490" y="87" width="12" height="1.4" fill="#000"/><rect x="510" y="75" width="1" height="19" fill="#1b6068"/><rect x="511" y="75" width="1" height="19" fill="#fff"/><path d="M521,85 L526,85" fill="none" stroke="#000" stroke-width="1" /><rect x="523" y="84" width="4" height="3" fill="#ffff00" stroke="#000" stroke-width="0.8"/><rect x="529.5" y="78.5" width="3" height="8" fill="#c0c000" stroke="#000" stroke-width="1"/><rect x="526" y="86" width="6" height="2" fill="#ffff00" stroke="#000" stroke-width="0.8"/><text x="550" y="88.5" font-size="13" fill="#000" font-weight="bold" font-style="normal" text-anchor="middle" font-family="Liberation Sans">%</text><text x="567" y="85" font-size="8.5" fill="#000" font-weight="bold" font-style="normal" text-anchor="start" font-family="Liberation Sans">$%</text><path d="M570,88 L579,88" fill="none" stroke="#000080" stroke-width="1.3" /><polygon points="568,88 571,86 571,90" fill="#000080"/><text x="590" y="82" font-size="6" fill="#909090" font-weight="normal" font-style="normal" text-anchor="start" font-family="Liberation Sans">0</text><path d="M595,78.5 L601,78.5 L601,83" fill="none" stroke="#000080" stroke-width="1.5" /><polygon points="599,82 603,82 601,84.5" fill="#000080"/><text x="589" y="89" font-size="8" fill="#000" font-weight="bold" font-style="normal" text-anchor="start" font-family="Liberation Sans">.000</text><text x="613" y="82" font-size="8" fill="#000" font-weight="bold" font-style="normal" text-anchor="start" font-family="Liberation Sans">.000</text><text x="624" y="82" font-size="6" fill="#909090" font-weight="normal" font-style="normal" text-anchor="start" font-family="Liberation Sans">0</text><text x="613" y="89" font-size="8" fill="#000" font-weight="bold" font-style="normal" text-anchor="start" font-family="Liberation Sans">0</text><path d="M619,86.5 L625,86.5 L625,82" fill="none" stroke="#000080" stroke-width="1.5" /><polygon points="617,86.5 620,84.5 620,88.5" fill="#000080"/><rect x="633" y="75" width="1" height="19" fill="#1b6068"/><rect x="634" y="75" width="1" height="19" fill="#fff"/><rect x="646" y="78" width="1" height="12" fill="#000"/><rect x="646" y="79" width="11" height="1.4" fill="#000"/><rect x="647" y="81.5" width="10" height="1.6" fill="#000"/><rect x="648" y="84" width="4" height="1.6" fill="#000"/><rect x="647" y="86.5" width="10" height="1.4" fill="#000"/><path d="M642,84.5 L647,84.5" fill="none" stroke="#000080" stroke-width="1.5" /><polygon points="641,84.5 644,82 644,87" fill="#000080"/><rect x="669" y="78" width="1" height="12" fill="#000"/><rect x="669" y="79" width="11" height="1.4" fill="#000"/><rect x="670" y="81.5" width="10" height="1.6" fill="#000"/><rect x="671" y="84" width="4" height="1.6" fill="#000"/><rect x="670" y="86.5" width="10" height="1.4" fill="#000"/><path d="M665,84.5 L670,84.5" fill="none" stroke="#000080" stroke-width="1.5" /><polygon points="664,84.5 667,82 667,87" fill="#000080"/><rect x="687" y="75" width="1" height="19" fill="#1b6068"/><rect x="688" y="75" width="1" height="19" fill="#fff"/><rect x="698.5" y="78.5" width="11" height="10" fill="none" stroke="#000080" stroke-width="1.5"/><rect x="720" y="77" width="14" height="3" fill="#000080"/><rect x="721" y="78" width="3" height="1" fill="#fff"/><rect x="725" y="78" width="3" height="1" fill="#fff"/><rect x="729" y="78" width="3" height="1" fill="#fff"/><rect x="720" y="81" width="5" height="6" fill="#a000a0"/><rect x="725.5" y="82.5" width="8" height="7" fill="#fff" stroke="#000" stroke-width="1.3"/><rect x="741" y="75" width="1" height="19" fill="#1b6068"/><rect x="742" y="75" width="1" height="19" fill="#fff"/><rect x="752.5" y="78.5" width="12" height="10" fill="#fff" stroke="#808080" stroke-width="1"/><rect x="751" y="78" width="1" height="12" fill="#808080"/><rect x="765" y="78" width="1" height="12" fill="#808080"/><rect x="754" y="80" width="3" height="1" fill="#000"/><rect x="754" y="82" width="5" height="1.3" fill="#000"/><rect x="761" y="81" width="1.4" height="6" fill="#000080"/><polygon points="759.5,82 763.5,82 761.7,79" fill="#000080"/><rect x="775.5" y="78.5" width="12" height="10" fill="#fff" stroke="#808080" stroke-width="1"/><rect x="774" y="78" width="1" height="12" fill="#808080"/><rect x="788" y="78" width="1" height="12" fill="#808080"/><rect x="777" y="80" width="3" height="1" fill="#000"/><rect x="777" y="82" width="5" height="1.3" fill="#000"/><rect x="784" y="80" width="1.4" height="7" fill="#000080"/><polygon points="782.5,81 786.5,81 784.7,79" fill="#000080"/><polygon points="782.5,86 786.5,86 784.7,88" fill="#000080"/><rect x="798.5" y="78.5" width="12" height="10" fill="#fff" stroke="#808080" stroke-width="1"/><rect x="797" y="78" width="1" height="12" fill="#808080"/><rect x="811" y="78" width="1" height="12" fill="#808080"/><rect x="800" y="80" width="3" height="1" fill="#000"/><rect x="800" y="82" width="5" height="1.3" fill="#000"/><rect x="807" y="79" width="1.4" height="6" fill="#000080"/><polygon points="805.5,85 809.5,85 807.7,88" fill="#000080"/><rect x="293.5" y="108.5" width="15" height="8" fill="#fff" stroke="#000" stroke-width="1"/><rect x="295" y="110" width="12" height="1" fill="#000"/><rect x="295" y="112" width="12" height="1" fill="#000"/><rect x="295" y="114" width="12" height="1" fill="#000"/><text x="324" y="117" font-size="14" fill="#000" font-weight="bold" font-style="normal" text-anchor="middle" font-family="Liberation Sans">Σ</text><text x="348" y="116" font-size="14" fill="#000" font-weight="bold" font-style="normal" text-anchor="middle" font-family="Liberation Sans">=</text><rect x="139.5" y="139.5" width="7" height="7" fill="#800080" stroke="#000" stroke-width="1"/><rect x="140" y="140" width="6" height="6" fill="#800080"/><rect x="140" y="140" width="1" height="1" fill="#c080c0"/><rect x="142" y="140" width="1" height="1" fill="#c080c0"/><rect x="144" y="140" width="1" height="1" fill="#c080c0"/><rect x="141" y="141" width="1" height="1" fill="#c080c0"/><rect x="143" y="141" width="1" height="1" fill="#c080c0"/><rect x="145" y="141" width="1" height="1" fill="#c080c0"/><rect x="140" y="142" width="1" height="1" fill="#c080c0"/><rect x="142" y="142" width="1" height="1" fill="#c080c0"/><rect x="144" y="142" width="1" height="1" fill="#c080c0"/><rect x="141" y="143" width="1" height="1" fill="#c080c0"/><rect x="143" y="143" width="1" height="1" fill="#c080c0"/><rect x="145" y="143" width="1" height="1" fill="#c080c0"/><rect x="140" y="144" width="1" height="1" fill="#c080c0"/><rect x="142" y="144" width="1" height="1" fill="#c080c0"/><rect x="144" y="144" width="1" height="1" fill="#c080c0"/><rect x="141" y="145" width="1" height="1" fill="#c080c0"/><rect x="143" y="145" width="1" height="1" fill="#c080c0"/><rect x="145" y="145" width="1" height="1" fill="#c080c0"/><circle cx="148.5" cy="138.5" r="3.2" fill="#ffff00" stroke="#000" stroke-width="0.8"/><rect x="147" y="136" width="2" height="2" fill="#fff"/><polygon points="147,142.5 141.5,148 152.5,148" fill="#40e0e0" stroke="#000" stroke-width="0.8"/><polygon points="151,134 155,137 151,140" fill="#00c000" stroke="#000" stroke-width="0.6"/><rect x="140" y="157" width="13" height="12" fill="#fff"/><rect x="140.5" y="157.5" width="12" height="11" fill="none" stroke="#000" stroke-width="1" stroke-dasharray="2,1"/><rect x="143.5" y="160.5" width="6" height="5" fill="#ffff00" stroke="#000080" stroke-width="1.3"/><polygon points="151,155 155,158 151,161" fill="#00c000" stroke="#000" stroke-width="0.6"/><circle cx="145.5" cy="186" r="6.5" fill="#ffff00" stroke="#000" stroke-width="1"/><path d="M145.5,186 L145.5,179.5 A6.5,6.5 0 0 1 152,186 Z" fill="#00e0e0" stroke="#000" stroke-width="0.8" /><path d="M145.5,186 L152,186 A6.5,6.5 0 0 1 140,190 Z" fill="#800080" stroke="#000" stroke-width="0.8" /><polygon points="150,178 154,181 150,184" fill="#00c000" stroke="#000" stroke-width="0.6"/><rect x="139.5" y="205.5" width="9" height="8" fill="#fff" stroke="#000" stroke-width="1"/><path d="M142,213 L152,203" fill="none" stroke="#000080" stroke-width="2.5" /><path d="M142,213 L143,211" fill="none" stroke="#fff" stroke-width="1" /><polygon points="150,200 154,203 150,206" fill="#00c000" stroke="#000" stroke-width="0.6"/><rect x="139.5" y="224.5" width="12" height="11" fill="#fff" stroke="#000" stroke-width="1"/><rect x="141" y="227" width="4" height="1" fill="#000"/><rect x="141" y="229" width="7" height="1" fill="#000"/><rect x="141" y="231" width="7" height="1" fill="#000"/><rect x="141" y="233" width="5" height="1" fill="#000"/><rect x="146" y="226" width="5" height="2" fill="#303030"/><polygon points="151,223 155,226 151,229" fill="#00c000" stroke="#000" stroke-width="0.6"/><rect x="135" y="242" width="22" height="1" fill="#1b6068"/><rect x="139.5" y="253.5" width="9" height="12" fill="#fff" stroke="#1b6068" stroke-width="1"/><rect x="141" y="255" width="6" height="1" fill="#1b6068"/><rect x="141" y="257" width="6" height="1" fill="#1b6068"/><rect x="141" y="259" width="6" height="1" fill="#1b6068"/><rect x="141" y="261" width="6" height="1" fill="#1b6068"/><rect x="141" y="263" width="6" height="1" fill="#1b6068"/><rect x="150" y="256" width="5" height="1" fill="#1b6068"/><rect x="152" y="254" width="1" height="5" fill="#1b6068"/><rect x="139.5" y="276.5" width="12" height="11" fill="#ffff00" stroke="#000080" stroke-width="2"/><path d="M142,285 C142,280 145,279 147,280" fill="none" stroke="#000080" stroke-width="1.5" /><polygon points="145,281 151,275 155,279 149,285" fill="#fff" stroke="#000" stroke-width="1"/><path d="M147,283 L151,279" fill="none" stroke="#a00000" stroke-width="2" /><text x="147" y="303" font-size="7" fill="#000" font-weight="bold" font-style="normal" text-anchor="middle" font-family="Liberation Sans">ABC</text><path d="M139,305 L142,309 L154,303" fill="none" stroke="#000080" stroke-width="2" /><text x="147" y="326" font-size="7" fill="#000" font-weight="bold" font-style="normal" text-anchor="middle" font-family="Liberation Sans">ABC</text><path d="M139,330 Q141,327 143,330 T147,330 T151,330 T155,330" fill="none" stroke="#e00000" stroke-width="1" /><path d="M141,345 L144,345 L144,352 L139,352 L139,348 Z" fill="#000" /><path d="M148,345 L151,345 L153,348 L153,352 L148,352 Z" fill="#000" /><rect x="143" y="347" width="6" height="3" fill="#000"/><rect x="140" y="350" width="1" height="1" fill="#ffff00"/><rect x="149" y="350" width="1" height="1" fill="#ffff00"/><rect x="141" y="342" width="2" height="3" fill="#000"/><rect x="149" y="342" width="2" height="3" fill="#000"/><rect x="135" y="362" width="22" height="1" fill="#1b6068"/><polygon points="139,376 149,376 145,382 143,382" fill="#ffffc0" stroke="#000" stroke-width="1"/><rect x="142" y="381" width="4" height="2" fill="#c0c000"/><rect x="151" y="371" width="1" height="6" fill="#909090"/><rect x="148" y="374" width="7" height="1" fill="#909090"/><text x="137.5" y="401" font-size="10" fill="#000080" font-weight="bold" font-style="normal" text-anchor="start" font-family="Liberation Sans">A</text><text x="145" y="408" font-size="10" fill="#000" font-weight="bold" font-style="normal" text-anchor="start" font-family="Liberation Sans">Z</text><path d="M140,402 L144,406" fill="none" stroke="#000080" stroke-width="1.2" /><polygon points="145,407 142,406 144,404" fill="#000080"/><text x="137.5" y="422" font-size="10" fill="#000080" font-weight="bold" font-style="normal" text-anchor="start" font-family="Liberation Sans">Z</text><text x="144.5" y="430" font-size="10" fill="#000" font-weight="bold" font-style="normal" text-anchor="start" font-family="Liberation Sans">A</text><path d="M140,423 L144,427" fill="none" stroke="#000080" stroke-width="1.2" /><polygon points="145,428 142,427 144,425" fill="#000080"/><rect x="135" y="435" width="22" height="1" fill="#1b6068"/><rect x="139.5" y="444.5" width="13" height="4" fill="#fff" stroke="#000" stroke-width="1.3"/><rect x="145" y="444" width="1" height="5" fill="#000"/><rect x="139.5" y="450.5" width="7" height="3" fill="#fff" stroke="#000" stroke-width="1.3"/><rect x="139.5" y="455.5" width="7" height="3" fill="#fff" stroke="#000" stroke-width="1.3"/><rect x="139.5" y="466.5" width="13" height="4" fill="#c0e0e0" stroke="#1b6068" stroke-width="1.3"/><rect x="139.5" y="471.5" width="6" height="3" fill="#fff" stroke="#1b6068" stroke-width="1.3"/><rect x="139.5" y="475.5" width="6" height="3" fill="#fff" stroke="#1b6068" stroke-width="1.3"/><path d="M147,472 L153,479 M153,472 L147,479" fill="none" stroke="#1b6068" stroke-width="2.2" /><rect x="140" y="488" width="1" height="6" fill="#909090"/><rect x="137" y="491" width="7" height="1" fill="#909090"/><g transform="rotate(-40 147 496)"><rect x="140.5" y="493.5" width="8" height="5" rx="2.5" fill="none" stroke="#000" stroke-width="1.6"/><rect x="145.5" y="493.5" width="8" height="5" rx="2.5" fill="none" stroke="#000" stroke-width="1.6"/></g><circle cx="126.5" cy="131" r="3.8" fill="#e8e8e8" stroke="#404040" stroke-width="0.8"/><path d="M123,134 L121,137" fill="none" stroke="#000" stroke-width="1" /><rect x="31.5" y="173.5" width="6" height="8" fill="#c0c0c0" stroke="#000" stroke-width="1"/><rect x="31" y="173" width="7" height="2" fill="#00e0e0"/><rect x="35.5" y="176.5" width="6" height="8" fill="#c0c0c0" stroke="#000" stroke-width="1"/><rect x="35" y="176" width="7" height="2" fill="#00e0e0"/><rect x="33" y="176" width="2" height="3" fill="#fff"/><rect x="37" y="179" width="2" height="3" fill="#fff"/><rect x="27.5" y="182.5" width="5" height="5" fill="#fff" stroke="#000" stroke-width="1"/><path d="M29,186 L31,184" fill="none" stroke="#000" stroke-width="0.8" /><rect x="28.5" y="189.5" width="13" height="10" fill="#404040" stroke="#000" stroke-width="1"/><rect x="30" y="191" width="10" height="7" fill="#fff"/><rect x="30" y="191" width="10" height="1" fill="#c00000"/><rect x="30" y="197" width="10" height="1" fill="#0000c0"/><rect x="30" y="191" width="1" height="7" fill="#0000c0"/><rect x="39" y="191" width="1" height="7" fill="#c00000"/><rect x="32" y="193" width="3" height="1" fill="#0000c0"/><rect x="36" y="193" width="2" height="3" fill="#909090"/><rect x="30" y="200" width="10" height="1" fill="#808080"/><rect x="33" y="201" width="4" height="1" fill="#00a0a0"/><rect x="39" y="198" width="2" height="1" fill="#00c000"/><path d="M28,207 L33,207 L34,208 L41,208 L41,218 L28,218 Z" fill="#ffff00" stroke="#606060" stroke-width="0.8" /><rect x="29" y="209" width="12" height="9" fill="#ffff00"/><rect x="29" y="209" width="1" height="1" fill="#e0e0a0"/><rect x="31" y="209" width="1" height="1" fill="#e0e0a0"/><rect x="33" y="209" width="1" height="1" fill="#e0e0a0"/><rect x="35" y="209" width="1" height="1" fill="#e0e0a0"/><rect x="37" y="209" width="1" height="1" fill="#e0e0a0"/><rect x="39" y="209" width="1" height="1" fill="#e0e0a0"/><rect x="30" y="210" width="1" height="1" fill="#e0e0a0"/><rect x="32" y="210" width="1" height="1" fill="#e0e0a0"/><rect x="34" y="210" width="1" height="1" fill="#e0e0a0"/><rect x="36" y="210" width="1" height="1" fill="#e0e0a0"/><rect x="38" y="210" width="1" height="1" fill="#e0e0a0"/><rect x="40" y="210" width="1" height="1" fill="#e0e0a0"/><rect x="29" y="211" width="1" height="1" fill="#e0e0a0"/><rect x="31" y="211" width="1" height="1" fill="#e0e0a0"/><rect x="33" y="211" width="1" height="1" fill="#e0e0a0"/><rect x="35" y="211" width="1" height="1" fill="#e0e0a0"/><rect x="37" y="211" width="1" height="1" fill="#e0e0a0"/><rect x="39" y="211" width="1" height="1" fill="#e0e0a0"/><rect x="30" y="212" width="1" height="1" fill="#e0e0a0"/><rect x="32" y="212" width="1" height="1" fill="#e0e0a0"/><rect x="34" y="212" width="1" height="1" fill="#e0e0a0"/><rect x="36" y="212" width="1" height="1" fill="#e0e0a0"/><rect x="38" y="212" width="1" height="1" fill="#e0e0a0"/><rect x="40" y="212" width="1" height="1" fill="#e0e0a0"/><rect x="29" y="213" width="1" height="1" fill="#e0e0a0"/><rect x="31" y="213" width="1" height="1" fill="#e0e0a0"/><rect x="33" y="213" width="1" height="1" fill="#e0e0a0"/><rect x="35" y="213" width="1" height="1" fill="#e0e0a0"/><rect x="37" y="213" width="1" height="1" fill="#e0e0a0"/><rect x="39" y="213" width="1" height="1" fill="#e0e0a0"/><rect x="30" y="214" width="1" height="1" fill="#e0e0a0"/><rect x="32" y="214" width="1" height="1" fill="#e0e0a0"/><rect x="34" y="214" width="1" height="1" fill="#e0e0a0"/><rect x="36" y="214" width="1" height="1" fill="#e0e0a0"/><rect x="38" y="214" width="1" height="1" fill="#e0e0a0"/><rect x="40" y="214" width="1" height="1" fill="#e0e0a0"/><rect x="29" y="215" width="1" height="1" fill="#e0e0a0"/><rect x="31" y="215" width="1" height="1" fill="#e0e0a0"/><rect x="33" y="215" width="1" height="1" fill="#e0e0a0"/><rect x="35" y="215" width="1" height="1" fill="#e0e0a0"/><rect x="37" y="215" width="1" height="1" fill="#e0e0a0"/><rect x="39" y="215" width="1" height="1" fill="#e0e0a0"/><rect x="30" y="216" width="1" height="1" fill="#e0e0a0"/><rect x="32" y="216" width="1" height="1" fill="#e0e0a0"/><rect x="34" y="216" width="1" height="1" fill="#e0e0a0"/><rect x="36" y="216" width="1" height="1" fill="#e0e0a0"/><rect x="38" y="216" width="1" height="1" fill="#e0e0a0"/><rect x="40" y="216" width="1" height="1" fill="#e0e0a0"/><rect x="29" y="217" width="1" height="1" fill="#e0e0a0"/><rect x="31" y="217" width="1" height="1" fill="#e0e0a0"/><rect x="33" y="217" width="1" height="1" fill="#e0e0a0"/><rect x="35" y="217" width="1" height="1" fill="#e0e0a0"/><rect x="37" y="217" width="1" height="1" fill="#e0e0a0"/><rect x="39" y="217" width="1" height="1" fill="#e0e0a0"/><rect x="41" y="208" width="1" height="11" fill="#000"/><rect x="28" y="218" width="14" height="1" fill="#000"/><rect x="33.5" y="210.5" width="9" height="7" fill="#fff" stroke="#000" stroke-width="0.8"/><rect x="35" y="213" width="4" height="1" fill="#000080"/><rect x="35" y="215" width="4" height="1" fill="#000080"/><rect x="40" y="212" width="2" height="2" fill="#c00000"/><path d="M28,223 L33,223 L34,224 L41,224 L41,234 L28,234 Z" fill="#ffff00" stroke="#606060" stroke-width="0.8" /><rect x="29" y="225" width="12" height="9" fill="#ffff00"/><rect x="29" y="225" width="1" height="1" fill="#e0e0a0"/><rect x="31" y="225" width="1" height="1" fill="#e0e0a0"/><rect x="33" y="225" width="1" height="1" fill="#e0e0a0"/><rect x="35" y="225" width="1" height="1" fill="#e0e0a0"/><rect x="37" y="225" width="1" height="1" fill="#e0e0a0"/><rect x="39" y="225" width="1" height="1" fill="#e0e0a0"/><rect x="30" y="226" width="1" height="1" fill="#e0e0a0"/><rect x="32" y="226" width="1" height="1" fill="#e0e0a0"/><rect x="34" y="226" width="1" height="1" fill="#e0e0a0"/><rect x="36" y="226" width="1" height="1" fill="#e0e0a0"/><rect x="38" y="226" width="1" height="1" fill="#e0e0a0"/><rect x="40" y="226" width="1" height="1" fill="#e0e0a0"/><rect x="29" y="227" width="1" height="1" fill="#e0e0a0"/><rect x="31" y="227" width="1" height="1" fill="#e0e0a0"/><rect x="33" y="227" width="1" height="1" fill="#e0e0a0"/><rect x="35" y="227" width="1" height="1" fill="#e0e0a0"/><rect x="37" y="227" width="1" height="1" fill="#e0e0a0"/><rect x="39" y="227" width="1" height="1" fill="#e0e0a0"/><rect x="30" y="228" width="1" height="1" fill="#e0e0a0"/><rect x="32" y="228" width="1" height="1" fill="#e0e0a0"/><rect x="34" y="228" width="1" height="1" fill="#e0e0a0"/><rect x="36" y="228" width="1" height="1" fill="#e0e0a0"/><rect x="38" y="228" width="1" height="1" fill="#e0e0a0"/><rect x="40" y="228" width="1" height="1" fill="#e0e0a0"/><rect x="29" y="229" width="1" height="1" fill="#e0e0a0"/><rect x="31" y="229" width="1" height="1" fill="#e0e0a0"/><rect x="33" y="229" width="1" height="1" fill="#e0e0a0"/><rect x="35" y="229" width="1" height="1" fill="#e0e0a0"/><rect x="37" y="229" width="1" height="1" fill="#e0e0a0"/><rect x="39" y="229" width="1" height="1" fill="#e0e0a0"/><rect x="30" y="230" width="1" height="1" fill="#e0e0a0"/><rect x="32" y="230" width="1" height="1" fill="#e0e0a0"/><rect x="34" y="230" width="1" height="1" fill="#e0e0a0"/><rect x="36" y="230" width="1" height="1" fill="#e0e0a0"/><rect x="38" y="230" width="1" height="1" fill="#e0e0a0"/><rect x="40" y="230" width="1" height="1" fill="#e0e0a0"/><rect x="29" y="231" width="1" height="1" fill="#e0e0a0"/><rect x="31" y="231" width="1" height="1" fill="#e0e0a0"/><rect x="33" y="231" width="1" height="1" fill="#e0e0a0"/><rect x="35" y="231" width="1" height="1" fill="#e0e0a0"/><rect x="37" y="231" width="1" height="1" fill="#e0e0a0"/><rect x="39" y="231" width="1" height="1" fill="#e0e0a0"/><rect x="30" y="232" width="1" height="1" fill="#e0e0a0"/><rect x="32" y="232" width="1" height="1" fill="#e0e0a0"/><rect x="34" y="232" width="1" height="1" fill="#e0e0a0"/><rect x="36" y="232" width="1" height="1" fill="#e0e0a0"/><rect x="38" y="232" width="1" height="1" fill="#e0e0a0"/><rect x="40" y="232" width="1" height="1" fill="#e0e0a0"/><rect x="29" y="233" width="1" height="1" fill="#e0e0a0"/><rect x="31" y="233" width="1" height="1" fill="#e0e0a0"/><rect x="33" y="233" width="1" height="1" fill="#e0e0a0"/><rect x="35" y="233" width="1" height="1" fill="#e0e0a0"/><rect x="37" y="233" width="1" height="1" fill="#e0e0a0"/><rect x="39" y="233" width="1" height="1" fill="#e0e0a0"/><rect x="41" y="224" width="1" height="11" fill="#000"/><rect x="28" y="234" width="14" height="1" fill="#000"/><rect x="27.5" y="230.5" width="5" height="5" fill="#fff" stroke="#000" stroke-width="1"/><path d="M29,234 L31,232" fill="none" stroke="#000" stroke-width="0.8" /><rect x="31.5" y="237.5" width="6" height="8" fill="#c0c0c0" stroke="#000" stroke-width="1"/><rect x="31" y="237" width="7" height="2" fill="#00e0e0"/><rect x="35.5" y="240.5" width="6" height="8" fill="#c0c0c0" stroke="#000" stroke-width="1"/><rect x="35" y="240" width="7" height="2" fill="#00e0e0"/><rect x="33" y="240" width="2" height="3" fill="#fff"/><rect x="37" y="243" width="2" height="3" fill="#fff"/><rect x="27.5" y="246.5" width="5" height="5" fill="#fff" stroke="#000" stroke-width="1"/><path d="M29,250 L31,248" fill="none" stroke="#000" stroke-width="0.8" /><path d="M28,255 L33,255 L34,256 L41,256 L41,266 L28,266 Z" fill="#ffff00" stroke="#606060" stroke-width="0.8" /><rect x="29" y="257" width="12" height="9" fill="#ffff00"/><rect x="29" y="257" width="1" height="1" fill="#e0e0a0"/><rect x="31" y="257" width="1" height="1" fill="#e0e0a0"/><rect x="33" y="257" width="1" height="1" fill="#e0e0a0"/><rect x="35" y="257" width="1" height="1" fill="#e0e0a0"/><rect x="37" y="257" width="1" height="1" fill="#e0e0a0"/><rect x="39" y="257" width="1" height="1" fill="#e0e0a0"/><rect x="30" y="258" width="1" height="1" fill="#e0e0a0"/><rect x="32" y="258" width="1" height="1" fill="#e0e0a0"/><rect x="34" y="258" width="1" height="1" fill="#e0e0a0"/><rect x="36" y="258" width="1" height="1" fill="#e0e0a0"/><rect x="38" y="258" width="1" height="1" fill="#e0e0a0"/><rect x="40" y="258" width="1" height="1" fill="#e0e0a0"/><rect x="29" y="259" width="1" height="1" fill="#e0e0a0"/><rect x="31" y="259" width="1" height="1" fill="#e0e0a0"/><rect x="33" y="259" width="1" height="1" fill="#e0e0a0"/><rect x="35" y="259" width="1" height="1" fill="#e0e0a0"/><rect x="37" y="259" width="1" height="1" fill="#e0e0a0"/><rect x="39" y="259" width="1" height="1" fill="#e0e0a0"/><rect x="30" y="260" width="1" height="1" fill="#e0e0a0"/><rect x="32" y="260" width="1" height="1" fill="#e0e0a0"/><rect x="34" y="260" width="1" height="1" fill="#e0e0a0"/><rect x="36" y="260" width="1" height="1" fill="#e0e0a0"/><rect x="38" y="260" width="1" height="1" fill="#e0e0a0"/><rect x="40" y="260" width="1" height="1" fill="#e0e0a0"/><rect x="29" y="261" width="1" height="1" fill="#e0e0a0"/><rect x="31" y="261" width="1" height="1" fill="#e0e0a0"/><rect x="33" y="261" width="1" height="1" fill="#e0e0a0"/><rect x="35" y="261" width="1" height="1" fill="#e0e0a0"/><rect x="37" y="261" width="1" height="1" fill="#e0e0a0"/><rect x="39" y="261" width="1" height="1" fill="#e0e0a0"/><rect x="30" y="262" width="1" height="1" fill="#e0e0a0"/><rect x="32" y="262" width="1" height="1" fill="#e0e0a0"/><rect x="34" y="262" width="1" height="1" fill="#e0e0a0"/><rect x="36" y="262" width="1" height="1" fill="#e0e0a0"/><rect x="38" y="262" width="1" height="1" fill="#e0e0a0"/><rect x="40" y="262" width="1" height="1" fill="#e0e0a0"/><rect x="29" y="263" width="1" height="1" fill="#e0e0a0"/><rect x="31" y="263" width="1" height="1" fill="#e0e0a0"/><rect x="33" y="263" width="1" height="1" fill="#e0e0a0"/><rect x="35" y="263" width="1" height="1" fill="#e0e0a0"/><rect x="37" y="263" width="1" height="1" fill="#e0e0a0"/><rect x="39" y="263" width="1" height="1" fill="#e0e0a0"/><rect x="30" y="264" width="1" height="1" fill="#e0e0a0"/><rect x="32" y="264" width="1" height="1" fill="#e0e0a0"/><rect x="34" y="264" width="1" height="1" fill="#e0e0a0"/><rect x="36" y="264" width="1" height="1" fill="#e0e0a0"/><rect x="38" y="264" width="1" height="1" fill="#e0e0a0"/><rect x="40" y="264" width="1" height="1" fill="#e0e0a0"/><rect x="29" y="265" width="1" height="1" fill="#e0e0a0"/><rect x="31" y="265" width="1" height="1" fill="#e0e0a0"/><rect x="33" y="265" width="1" height="1" fill="#e0e0a0"/><rect x="35" y="265" width="1" height="1" fill="#e0e0a0"/><rect x="37" y="265" width="1" height="1" fill="#e0e0a0"/><rect x="39" y="265" width="1" height="1" fill="#e0e0a0"/><rect x="41" y="256" width="1" height="11" fill="#000"/><rect x="28" y="266" width="14" height="1" fill="#000"/><text x="35" y="265" font-size="9" fill="#000080" font-weight="bold" font-style="normal" text-anchor="middle" font-family="Liberation Sans">*</text><rect x="27.5" y="262.5" width="5" height="5" fill="#fff" stroke="#000" stroke-width="1"/><path d="M29,266 L31,264" fill="none" stroke="#000" stroke-width="0.8" /><path d="M28,271 L33,271 L34,272 L41,272 L41,282 L28,282 Z" fill="#ffff00" stroke="#606060" stroke-width="0.8" /><rect x="29" y="273" width="12" height="9" fill="#ffff00"/><rect x="29" y="273" width="1" height="1" fill="#e0e0a0"/><rect x="31" y="273" width="1" height="1" fill="#e0e0a0"/><rect x="33" y="273" width="1" height="1" fill="#e0e0a0"/><rect x="35" y="273" width="1" height="1" fill="#e0e0a0"/><rect x="37" y="273" width="1" height="1" fill="#e0e0a0"/><rect x="39" y="273" width="1" height="1" fill="#e0e0a0"/><rect x="30" y="274" width="1" height="1" fill="#e0e0a0"/><rect x="32" y="274" width="1" height="1" fill="#e0e0a0"/><rect x="34" y="274" width="1" height="1" fill="#e0e0a0"/><rect x="36" y="274" width="1" height="1" fill="#e0e0a0"/><rect x="38" y="274" width="1" height="1" fill="#e0e0a0"/><rect x="40" y="274" width="1" height="1" fill="#e0e0a0"/><rect x="29" y="275" width="1" height="1" fill="#e0e0a0"/><rect x="31" y="275" width="1" height="1" fill="#e0e0a0"/><rect x="33" y="275" width="1" height="1" fill="#e0e0a0"/><rect x="35" y="275" width="1" height="1" fill="#e0e0a0"/><rect x="37" y="275" width="1" height="1" fill="#e0e0a0"/><rect x="39" y="275" width="1" height="1" fill="#e0e0a0"/><rect x="30" y="276" width="1" height="1" fill="#e0e0a0"/><rect x="32" y="276" width="1" height="1" fill="#e0e0a0"/><rect x="34" y="276" width="1" height="1" fill="#e0e0a0"/><rect x="36" y="276" width="1" height="1" fill="#e0e0a0"/><rect x="38" y="276" width="1" height="1" fill="#e0e0a0"/><rect x="40" y="276" width="1" height="1" fill="#e0e0a0"/><rect x="29" y="277" width="1" height="1" fill="#e0e0a0"/><rect x="31" y="277" width="1" height="1" fill="#e0e0a0"/><rect x="33" y="277" width="1" height="1" fill="#e0e0a0"/><rect x="35" y="277" width="1" height="1" fill="#e0e0a0"/><rect x="37" y="277" width="1" height="1" fill="#e0e0a0"/><rect x="39" y="277" width="1" height="1" fill="#e0e0a0"/><rect x="30" y="278" width="1" height="1" fill="#e0e0a0"/><rect x="32" y="278" width="1" height="1" fill="#e0e0a0"/><rect x="34" y="278" width="1" height="1" fill="#e0e0a0"/><rect x="36" y="278" width="1" height="1" fill="#e0e0a0"/><rect x="38" y="278" width="1" height="1" fill="#e0e0a0"/><rect x="40" y="278" width="1" height="1" fill="#e0e0a0"/><rect x="29" y="279" width="1" height="1" fill="#e0e0a0"/><rect x="31" y="279" width="1" height="1" fill="#e0e0a0"/><rect x="33" y="279" width="1" height="1" fill="#e0e0a0"/><rect x="35" y="279" width="1" height="1" fill="#e0e0a0"/><rect x="37" y="279" width="1" height="1" fill="#e0e0a0"/><rect x="39" y="279" width="1" height="1" fill="#e0e0a0"/><rect x="30" y="280" width="1" height="1" fill="#e0e0a0"/><rect x="32" y="280" width="1" height="1" fill="#e0e0a0"/><rect x="34" y="280" width="1" height="1" fill="#e0e0a0"/><rect x="36" y="280" width="1" height="1" fill="#e0e0a0"/><rect x="38" y="280" width="1" height="1" fill="#e0e0a0"/><rect x="40" y="280" width="1" height="1" fill="#e0e0a0"/><rect x="29" y="281" width="1" height="1" fill="#e0e0a0"/><rect x="31" y="281" width="1" height="1" fill="#e0e0a0"/><rect x="33" y="281" width="1" height="1" fill="#e0e0a0"/><rect x="35" y="281" width="1" height="1" fill="#e0e0a0"/><rect x="37" y="281" width="1" height="1" fill="#e0e0a0"/><rect x="39" y="281" width="1" height="1" fill="#e0e0a0"/><rect x="41" y="272" width="1" height="11" fill="#000"/><rect x="28" y="282" width="14" height="1" fill="#000"/><rect x="27.5" y="278.5" width="5" height="5" fill="#fff" stroke="#000" stroke-width="1"/><path d="M29,282 L31,280" fill="none" stroke="#000" stroke-width="0.8" /><rect x="28.5" y="285.5" width="11" height="9" fill="#a0a0ff" stroke="#000" stroke-width="1"/><rect x="30" y="287" width="8" height="6" fill="#ffa000"/><rect x="31" y="289" width="3" height="3" fill="#00c0c0"/><rect x="33.5" y="293.5" width="8" height="6" fill="#ffff00" stroke="#000" stroke-width="0.8"/><polygon points="29,312 35,302 42,304 37,314" fill="#000080" stroke="#000" stroke-width="1"/><rect x="31" y="312" width="6" height="2" fill="#ffffff"/><text x="36" y="310" font-size="8" fill="#ffff00" font-weight="bold" font-style="normal" text-anchor="middle" font-family="Liberation Sans">?</text><rect x="31.5" y="317.5" width="9" height="12" fill="#e0e0e0" stroke="#000" stroke-width="0.8"/><rect x="30" y="318" width="12" height="2" fill="#c0c0c0" stroke="#000" stroke-width="0.6"/><rect x="33" y="321" width="1" height="8" fill="#808080"/><rect x="35" y="321" width="1" height="8" fill="#808080"/><rect x="37" y="321" width="1" height="8" fill="#808080"/><rect x="39" y="321" width="1" height="8" fill="#808080"/><rect x="28.5" y="334.5" width="8" height="11" fill="#fff" stroke="#000" stroke-width="0.8"/><rect x="31.5" y="337.5" width="10" height="9" fill="#ffffd0" stroke="#000" stroke-width="0.8"/><path d="M33,342 L36,345 L41,339" fill="none" stroke="#00a000" stroke-width="1.6" /><rect x="30" y="335" width="2" height="9" fill="#00c0c0"/><path d="M28,351 L33,351 L34,352 L41,352 L41,362 L28,362 Z" fill="#ffff00" stroke="#606060" stroke-width="0.8" /><rect x="29" y="353" width="12" height="9" fill="#ffff00"/><rect x="29" y="353" width="1" height="1" fill="#e0e0a0"/><rect x="31" y="353" width="1" height="1" fill="#e0e0a0"/><rect x="33" y="353" width="1" height="1" fill="#e0e0a0"/><rect x="35" y="353" width="1" height="1" fill="#e0e0a0"/><rect x="37" y="353" width="1" height="1" fill="#e0e0a0"/><rect x="39" y="353" width="1" height="1" fill="#e0e0a0"/><rect x="30" y="354" width="1" height="1" fill="#e0e0a0"/><rect x="32" y="354" width="1" height="1" fill="#e0e0a0"/><rect x="34" y="354" width="1" height="1" fill="#e0e0a0"/><rect x="36" y="354" width="1" height="1" fill="#e0e0a0"/><rect x="38" y="354" width="1" height="1" fill="#e0e0a0"/><rect x="40" y="354" width="1" height="1" fill="#e0e0a0"/><rect x="29" y="355" width="1" height="1" fill="#e0e0a0"/><rect x="31" y="355" width="1" height="1" fill="#e0e0a0"/><rect x="33" y="355" width="1" height="1" fill="#e0e0a0"/><rect x="35" y="355" width="1" height="1" fill="#e0e0a0"/><rect x="37" y="355" width="1" height="1" fill="#e0e0a0"/><rect x="39" y="355" width="1" height="1" fill="#e0e0a0"/><rect x="30" y="356" width="1" height="1" fill="#e0e0a0"/><rect x="32" y="356" width="1" height="1" fill="#e0e0a0"/><rect x="34" y="356" width="1" height="1" fill="#e0e0a0"/><rect x="36" y="356" width="1" height="1" fill="#e0e0a0"/><rect x="38" y="356" width="1" height="1" fill="#e0e0a0"/><rect x="40" y="356" width="1" height="1" fill="#e0e0a0"/><rect x="29" y="357" width="1" height="1" fill="#e0e0a0"/><rect x="31" y="357" width="1" height="1" fill="#e0e0a0"/><rect x="33" y="357" width="1" height="1" fill="#e0e0a0"/><rect x="35" y="357" width="1" height="1" fill="#e0e0a0"/><rect x="37" y="357" width="1" height="1" fill="#e0e0a0"/><rect x="39" y="357" width="1" height="1" fill="#e0e0a0"/><rect x="30" y="358" width="1" height="1" fill="#e0e0a0"/><rect x="32" y="358" width="1" height="1" fill="#e0e0a0"/><rect x="34" y="358" width="1" height="1" fill="#e0e0a0"/><rect x="36" y="358" width="1" height="1" fill="#e0e0a0"/><rect x="38" y="358" width="1" height="1" fill="#e0e0a0"/><rect x="40" y="358" width="1" height="1" fill="#e0e0a0"/><rect x="29" y="359" width="1" height="1" fill="#e0e0a0"/><rect x="31" y="359" width="1" height="1" fill="#e0e0a0"/><rect x="33" y="359" width="1" height="1" fill="#e0e0a0"/><rect x="35" y="359" width="1" height="1" fill="#e0e0a0"/><rect x="37" y="359" width="1" height="1" fill="#e0e0a0"/><rect x="39" y="359" width="1" height="1" fill="#e0e0a0"/><rect x="30" y="360" width="1" height="1" fill="#e0e0a0"/><rect x="32" y="360" width="1" height="1" fill="#e0e0a0"/><rect x="34" y="360" width="1" height="1" fill="#e0e0a0"/><rect x="36" y="360" width="1" height="1" fill="#e0e0a0"/><rect x="38" y="360" width="1" height="1" fill="#e0e0a0"/><rect x="40" y="360" width="1" height="1" fill="#e0e0a0"/><rect x="29" y="361" width="1" height="1" fill="#e0e0a0"/><rect x="31" y="361" width="1" height="1" fill="#e0e0a0"/><rect x="33" y="361" width="1" height="1" fill="#e0e0a0"/><rect x="35" y="361" width="1" height="1" fill="#e0e0a0"/><rect x="37" y="361" width="1" height="1" fill="#e0e0a0"/><rect x="39" y="361" width="1" height="1" fill="#e0e0a0"/><rect x="41" y="352" width="1" height="11" fill="#000"/><rect x="28" y="362" width="14" height="1" fill="#000"/><text x="35" y="361" font-size="9" fill="#000080" font-weight="bold" font-style="normal" text-anchor="middle" font-family="Liberation Sans">*</text><circle cx="14" cy="746" r="2.5" fill="#ff0000"/><circle cx="19" cy="744" r="2.5" fill="#00ff00"/><circle cx="14" cy="752" r="2.5" fill="#0000ff"/><circle cx="21" cy="750" r="2.5" fill="#ffff00"/><circle cx="17" cy="748" r="2.5" fill="#ff00ff"/><circle cx="24" cy="754" r="2.5" fill="#00c0ff"/><circle cx="12" cy="749" r="2.5" fill="#ffff00"/><path d="M12,743 L26,756" fill="none" stroke="#000" stroke-width="1.2" /><path d="M18,741 L15,757" fill="none" stroke="#000" stroke-width="0.8" /><polygon points="77,756 84,748 93,752 88,758" fill="#ffffff" stroke="#000" stroke-width="0.8"/><rect x="79" y="754" width="2" height="3" fill="#0000c0"/><path d="M80,752 L86,747" fill="none" stroke="#0000a0" stroke-width="1.5" /><polygon points="89,746 94,746 91.5,742" fill="#00c000"/><path d="M78,758 L92,758" fill="none" stroke="#c00000" stroke-width="1" /><rect x="115.5" y="743.5" width="9" height="14" fill="#fff" stroke="#000" stroke-width="1"/><rect x="117" y="746" width="6" height="1" fill="#808080"/><rect x="117" y="748" width="6" height="1" fill="#808080"/><rect x="117" y="750" width="4" height="1" fill="#808080"/><rect x="120" y="752" width="3" height="4" fill="#0000c0"/><rect x="211.5" y="743.5" width="9" height="14" fill="#fff" stroke="#000" stroke-width="1"/><rect x="213" y="746" width="6" height="1" fill="#808080"/><rect x="213" y="748" width="6" height="1" fill="#808080"/><rect x="213" y="750" width="4" height="1" fill="#808080"/><rect x="216" y="752" width="3" height="4" fill="#0000c0"/><rect x="307.5" y="743.5" width="9" height="14" fill="#fff" stroke="#000" stroke-width="1"/><rect x="309" y="746" width="6" height="1" fill="#808080"/><rect x="309" y="748" width="6" height="1" fill="#808080"/><rect x="309" y="750" width="4" height="1" fill="#808080"/><rect x="312" y="752" width="3" height="4" fill="#0000c0"/><path d="M402.5,743.5 L409,743.5 L412.5,747 L412.5,757.5 L402.5,757.5 Z" fill="#fff" stroke="#000" stroke-width="1" /><path d="M409,743.5 L409,747 L412.5,747" fill="none" stroke="#000" stroke-width="1" /><circle cx="955" cy="751" r="6" fill="#00a000" stroke="#000" stroke-width="0.8"/><path d="M951,747 L956,745 L960,750 L957,755 L952,754 Z" fill="#0000c0" /><path d="M948,754 L957,754" fill="none" stroke="#fff" stroke-width="2.5" /><polygon points="956,751 960,754 956,757" fill="#fff" stroke="#000" stroke-width="0.6"/></svg>
</body></html>
